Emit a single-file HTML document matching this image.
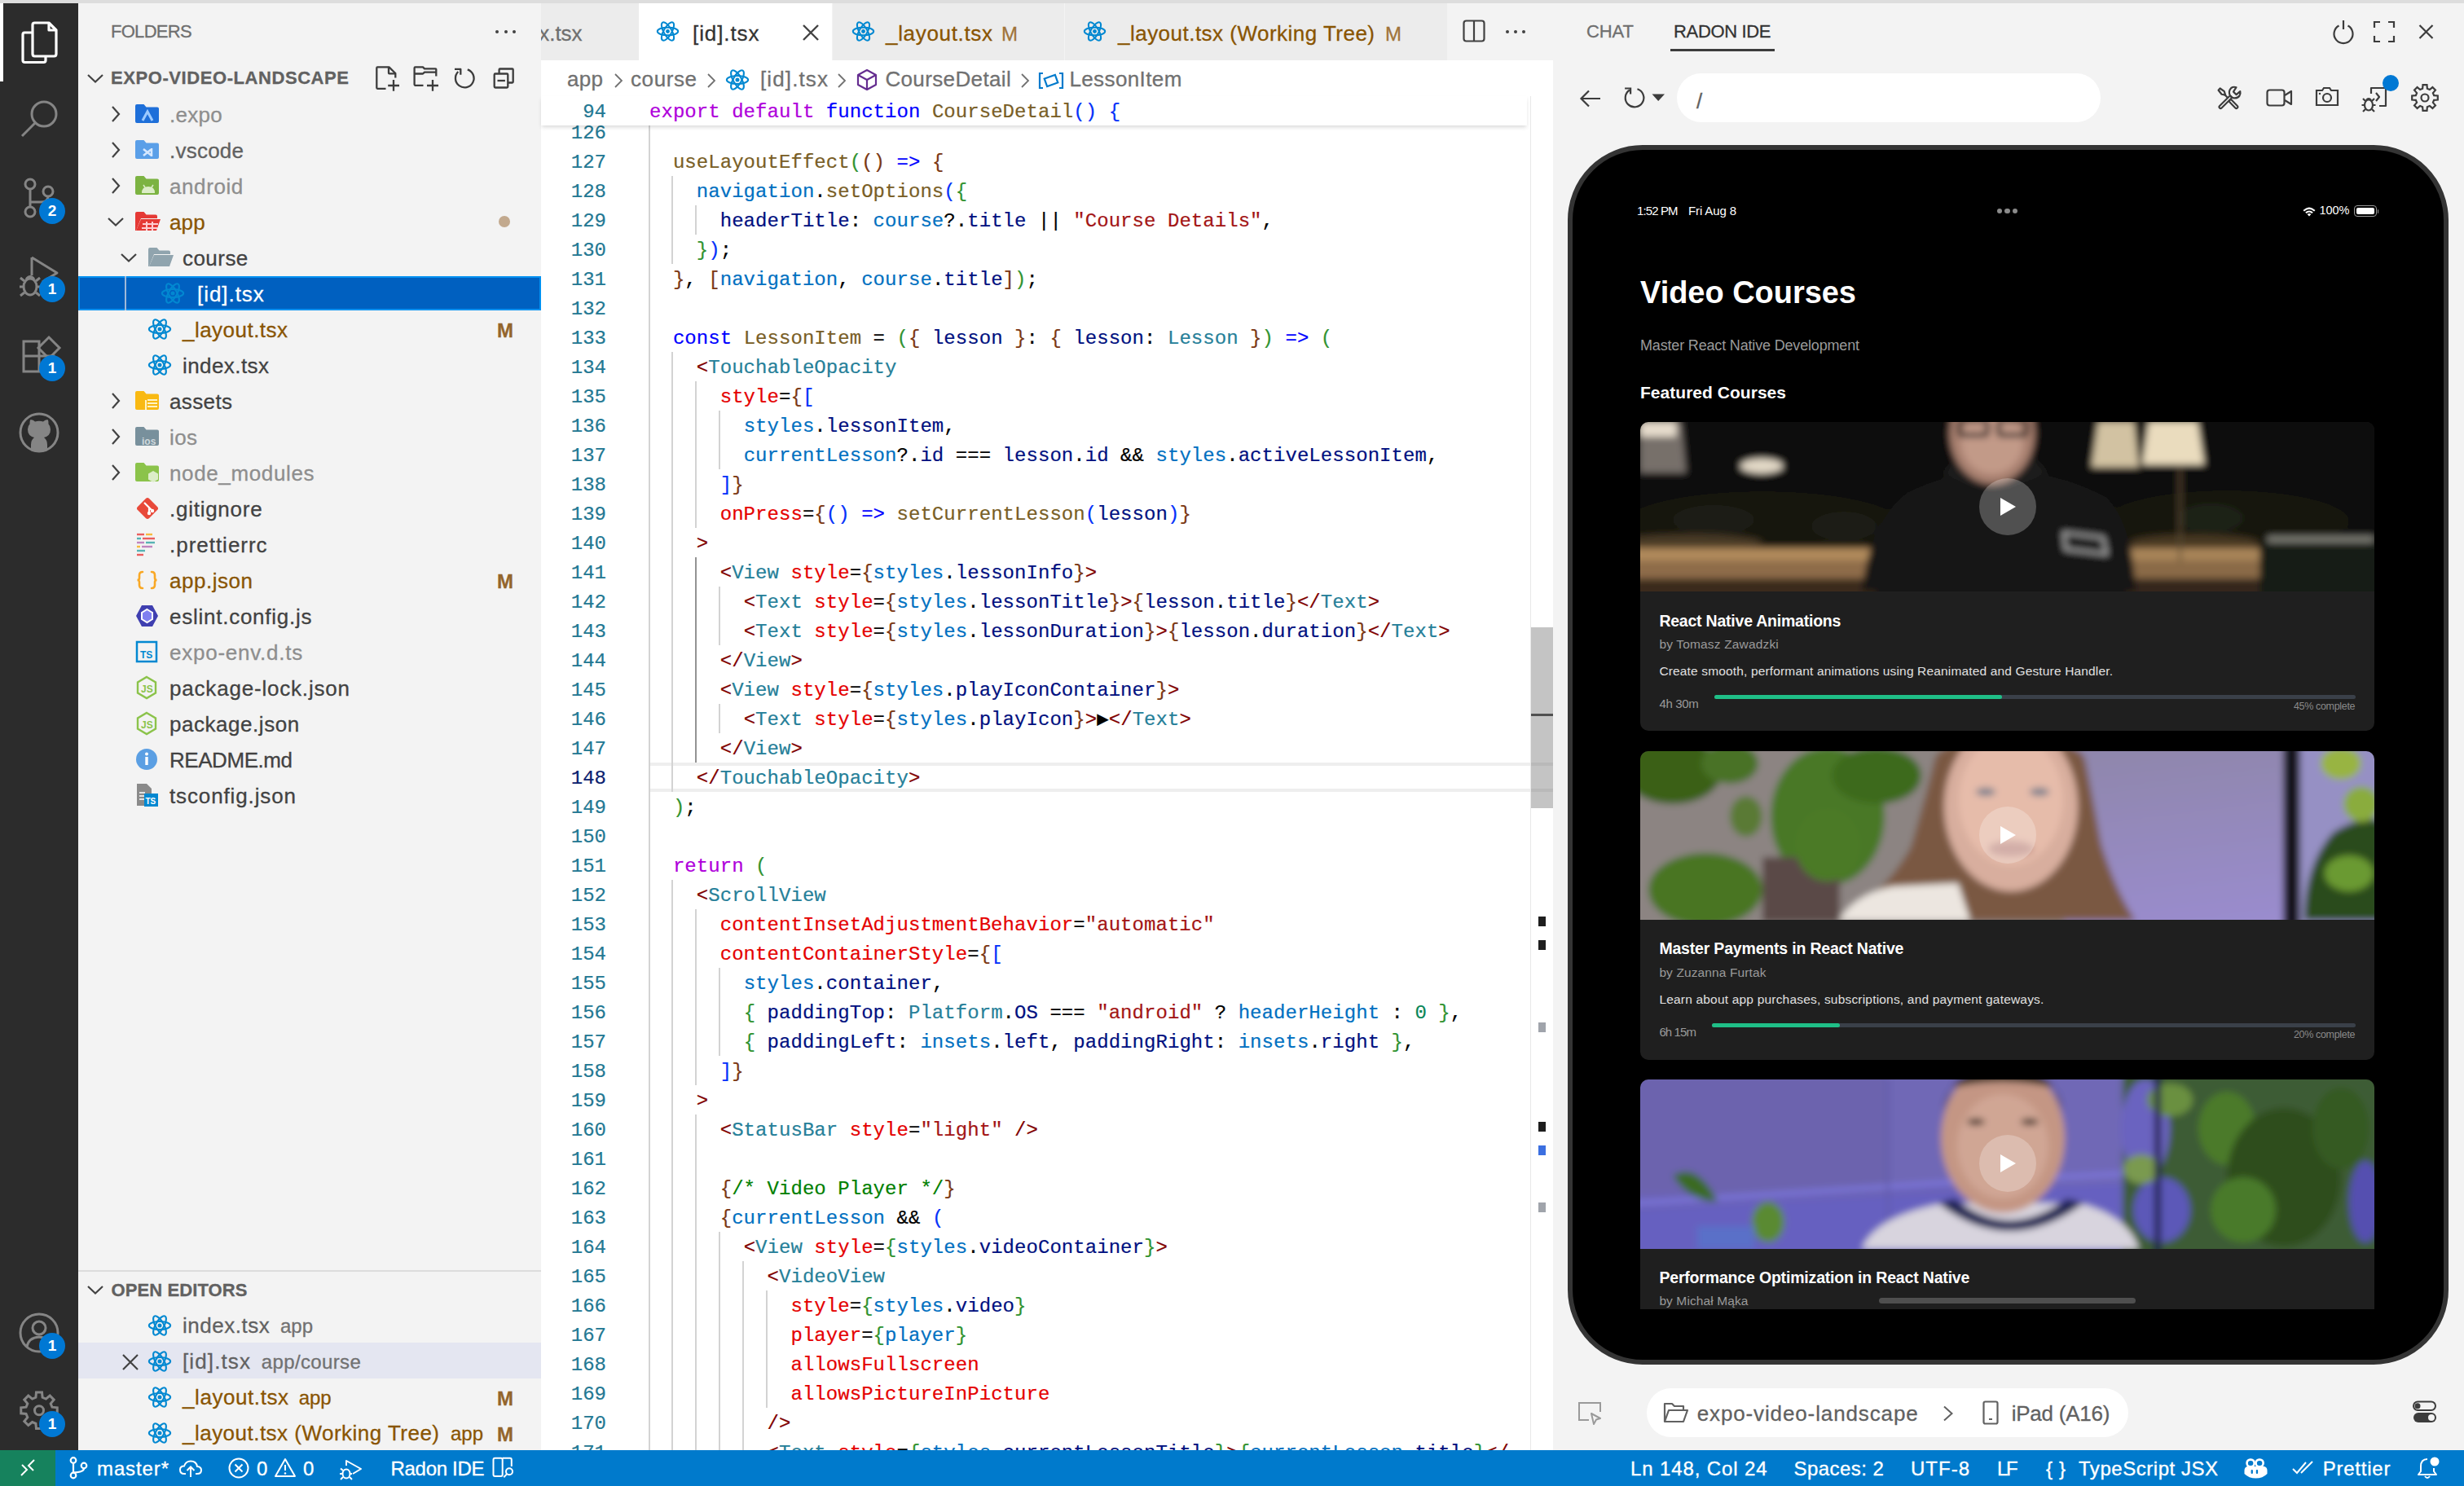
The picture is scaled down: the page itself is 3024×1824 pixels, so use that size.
<!DOCTYPE html><html><head><meta charset="utf-8"><style>
html,body{margin:0;padding:0;}
body{width:3024px;height:1824px;position:relative;overflow:hidden;background:#f3f3f3;font-family:"Liberation Sans",sans-serif;}
svg{overflow:visible}
</style></head><body>

<div style="position:absolute;left:0px;top:0px;width:3024px;height:4px;background:#dddddd;"></div>
<div style="position:absolute;left:0px;top:4px;width:96px;height:1776px;background:#2c2c2c;"></div>
<div style="position:absolute;left:96px;top:4px;width:568px;height:1776px;background:#f3f3f3;"></div>
<div style="position:absolute;left:664px;top:4px;width:1242px;height:70px;background:#f3f3f3;"></div>
<div style="position:absolute;left:664px;top:74px;width:1242px;height:1706px;background:#ffffff;"></div>
<div style="position:absolute;left:1906px;top:4px;width:1118px;height:1776px;background:#f3f3f3;"></div>
<div style="position:absolute;left:0px;top:1780px;width:3024px;height:44px;background:#007acc;"></div>
<div style="position:absolute;left:0px;top:1780px;width:68px;height:44px;background:#16825d;"></div>
<div style="position:absolute;left:0px;top:4px;width:4px;height:96px;background:#ffffff;"></div>
<svg style="position:absolute;left:24px;top:26px;" width="48" height="52" viewBox="0 0 48 52"><g fill="none" stroke="#fff" stroke-width="3.2" stroke-linejoin="round">
<path d="M16 12 V4.5 Q16 2 18.5 2 H36 L45 11 V40 Q45 43 42.5 43 H18.5 Q16 43 16 40 Z"/>
<path d="M36 2 V11 H45"/>
<path d="M16 14 H6 Q4 14 4 16.5 V48 Q4 50.5 6.5 50.5 H29.5 Q32 50.5 32 48 V43"/>
</g></svg>
<svg style="position:absolute;left:24px;top:122px;" width="50" height="50" viewBox="0 0 50 50"><g fill="none" stroke="#858585" stroke-width="3"><circle cx="30" cy="18" r="15"/><path d="M19.5 28.5 L3 45"/></g></svg>
<svg style="position:absolute;left:24px;top:218px;" width="50" height="52" viewBox="0 0 50 52"><g fill="none" stroke="#858585" stroke-width="3"><circle cx="13" cy="8" r="6"/><circle cx="13" cy="42" r="6"/><circle cx="35" cy="17" r="6"/><path d="M13 14 V36 M35 23 Q35 30 26 30 H13"/></g></svg>
<svg style="position:absolute;left:22px;top:312px;" width="52" height="56" viewBox="0 0 52 56"><g fill="none" stroke="#858585" stroke-width="3" stroke-linejoin="round"><path d="M17 4 V26 M17 4 L48 23 L30 34"/>
<ellipse cx="15" cy="40" rx="8" ry="10"/><path d="M7 40 H2 M23 40 H28 M8 33 L3 29 M22 33 L27 29 M8 47 L3 51 M22 47 L27 51 M10 31 Q15 24 20 31"/></g></svg>
<svg style="position:absolute;left:26px;top:410px;" width="50" height="52" viewBox="0 0 50 52"><g fill="none" stroke="#858585" stroke-width="3"><path d="M3 9 H22 V46 H3 Z M3 27 H40 V46 H22"/><path d="M34 4 L47 17 L34 30 L21 17 Z"/></g></svg>
<svg style="position:absolute;left:22px;top:506px;" width="52" height="52" viewBox="0 0 52 52"><circle cx="26" cy="25" r="23" fill="none" stroke="#858585" stroke-width="3"/>
<path fill="#858585" d="M16 40 Q16 34 20 31 Q12 29 12 21 Q12 17 14.5 14.5 Q14 11 15.5 9 Q19 9 21 11.5 Q26 10 31 11.5 Q33 9 36.5 9 Q38 11 37.5 14.5 Q40 17 40 21 Q40 29 32 31 Q36 34 36 40 V47 Q26 50 16 47 Z"/></svg>
<svg style="position:absolute;left:22px;top:1610px;" width="54" height="54" viewBox="0 0 54 54"><g fill="none" stroke="#858585" stroke-width="3"><circle cx="26" cy="26" r="23"/><circle cx="26" cy="20" r="8"/><path d="M11 43 Q13 32 26 31 Q39 32 41 43"/></g></svg>
<svg style="position:absolute;left:22px;top:1706px;" width="54" height="54" viewBox="0 0 54 54"><polygon points="21.90,9.32 22.48,3.08 29.52,3.08 30.10,9.32 34.40,11.10 39.23,7.10 44.20,12.07 40.20,16.90 41.98,21.20 48.22,21.78 48.22,28.82 41.98,29.40 40.20,33.70 44.20,38.53 39.23,43.50 34.40,39.50 30.10,41.28 29.52,47.52 22.48,47.52 21.90,41.28 17.60,39.50 12.77,43.50 7.80,38.53 11.80,33.70 10.02,29.40 3.78,28.82 3.78,21.78 10.02,21.20 11.80,16.90 7.80,12.07 12.77,7.10 17.60,11.10" fill="none" stroke="#858585" stroke-width="3" stroke-linejoin="miter"/><circle cx="26" cy="25.3" r="5.5" fill="none" stroke="#858585" stroke-width="3"/></svg>
<div style="position:absolute;left:48px;top:243px;width:32px;height:32px;border-radius:16px;background:#0078d4;color:#fff;font:700 19px/32px 'Liberation Sans', sans-serif;text-align:center;">2</div>
<div style="position:absolute;left:48px;top:339px;width:32px;height:32px;border-radius:16px;background:#0078d4;color:#fff;font:700 19px/32px 'Liberation Sans', sans-serif;text-align:center;">1</div>
<div style="position:absolute;left:48px;top:436px;width:32px;height:32px;border-radius:16px;background:#0078d4;color:#fff;font:700 19px/32px 'Liberation Sans', sans-serif;text-align:center;">1</div>
<div style="position:absolute;left:48px;top:1636px;width:32px;height:32px;border-radius:16px;background:#0078d4;color:#fff;font:700 19px/32px 'Liberation Sans', sans-serif;text-align:center;">1</div>
<div style="position:absolute;left:48px;top:1732px;width:32px;height:32px;border-radius:16px;background:#0078d4;color:#fff;font:700 19px/32px 'Liberation Sans', sans-serif;text-align:center;">1</div>
<div style="position:absolute;left:136px;top:17.38px;font:400 22px/44px 'Liberation Sans', sans-serif;color:#6f6f6f;white-space:pre;-webkit-text-stroke:0.3px #6f6f6f;letter-spacing:-0.719px;">FOLDERS</div>
<div style="position:absolute;left:608px;top:37px;width:4px;height:4px;background:#424242;border-radius:2px;"></div>
<div style="position:absolute;left:618.5px;top:37px;width:4px;height:4px;background:#424242;border-radius:2px;"></div>
<div style="position:absolute;left:629px;top:37px;width:4px;height:4px;background:#424242;border-radius:2px;"></div>
<svg style="position:absolute;left:106px;top:89px;" width="22" height="14" viewBox="0 0 22 14"><path d="M2 3 L11 11.5 L20 3" fill="none" stroke="#424242" stroke-width="2.2"/></svg>
<div style="position:absolute;left:136px;top:74.38px;font:700 22px/44px 'Liberation Sans', sans-serif;color:#616161;white-space:pre;-webkit-text-stroke:0.3px #616161;letter-spacing:0.571px;">EXPO-VIDEO-LANDSCAPE</div>
<svg style="position:absolute;left:440px;top:70px;" width="210" height="55" viewBox="0 0 210 55"><g fill="none" stroke="#3c3c3c" stroke-width="2.3" stroke-linejoin="round">
<path d="M33.5 38.8 H23.3 Q22.3 38.8 22.3 37.8 V13.4 Q22.3 12.4 23.3 12.4 H37.5 L45.3 20 V25.5"/><path d="M37 12.6 V19.6 Q37 20.3 37.7 20.3 H45.2"/>
<path d="M36.2 35 H50 M43 28.1 V41.8"/>
<path d="M79.5 34.8 H69.6 Q68.6 34.8 68.6 33.8 V13.4 Q68.6 12.4 69.6 12.4 H79 L81 14.3 H94.5 Q95.3 14.3 95.3 15.1 V23.5 M68.8 20.5 H79 L81 18.6 H95.2"/>
<path d="M84 35 H98 M91 28.1 V41.8"/>
<path d="M133.8 15.3 A11.3 11.3 0 1 1 122.3 18"/><path d="M118 14.9 H125.3 V21.7"/>
<path d="M172.6 20.3 V15.5 Q172.6 14.5 173.6 14.5 H188.7 Q189.7 14.5 189.7 15.5 V30.5 Q189.7 31.5 188.7 31.5 H183.5"/>
<rect x="166.7" y="20.5" width="16.6" height="17" rx="1.2"/><path d="M170.5 29 H179.9"/>
</g></svg>
<div style="position:absolute;left:96px;top:339px;width:568px;height:42px;background:#0060c0;box-shadow:inset 0 0 0 2px #0090f1;"></div>
<div style="position:absolute;left:153px;top:339px;width:2px;height:42px;background:#a0b8d8;"></div>
<svg style="position:absolute;left:135px;top:129px;" width="14" height="22" viewBox="0 0 14 22"><path d="M3 2 L11 11 L3 20" fill="none" stroke="#424242" stroke-width="2.2"/></svg>
<svg style="position:absolute;left:166px;top:127px;" width="30" height="26" viewBox="0 0 30 26"><path d="M0 3 Q0 1 2 1 H10.5 L13.5 4.5 H27 Q29 4.5 29 6.5 V22 Q29 24 27 24 H2 Q0 24 0 22 Z" fill="#1e6fd9"/><path d="M9 21 L15 10 L21 21" fill="none" stroke="#9ccaff" stroke-width="3"/></svg>
<div style="position:absolute;left:208px;top:114.99px;font:400 26px/52px 'Liberation Sans', sans-serif;color:#8e8e8e;white-space:pre;-webkit-text-stroke:0.3px #8e8e8e;letter-spacing:0.249px;">.expo</div>
<svg style="position:absolute;left:135px;top:173px;" width="14" height="22" viewBox="0 0 14 22"><path d="M3 2 L11 11 L3 20" fill="none" stroke="#424242" stroke-width="2.2"/></svg>
<svg style="position:absolute;left:166px;top:171px;" width="30" height="26" viewBox="0 0 30 26"><path d="M0 3 Q0 1 2 1 H10.5 L13.5 4.5 H27 Q29 4.5 29 6.5 V22 Q29 24 27 24 H2 Q0 24 0 22 Z" fill="#5a9fe8"/><path d="M10 12 L20 20 M10 20 L20 12 M20 11 V21" fill="none" stroke="#d6e8ff" stroke-width="2.5"/></svg>
<div style="position:absolute;left:208px;top:158.99px;font:400 26px/52px 'Liberation Sans', sans-serif;color:#616161;white-space:pre;-webkit-text-stroke:0.3px #616161;letter-spacing:0.232px;">.vscode</div>
<svg style="position:absolute;left:135px;top:217px;" width="14" height="22" viewBox="0 0 14 22"><path d="M3 2 L11 11 L3 20" fill="none" stroke="#424242" stroke-width="2.2"/></svg>
<svg style="position:absolute;left:166px;top:215px;" width="30" height="26" viewBox="0 0 30 26"><path d="M0 3 Q0 1 2 1 H10.5 L13.5 4.5 H27 Q29 4.5 29 6.5 V22 Q29 24 27 24 H2 Q0 24 0 22 Z" fill="#7cb342"/><path d="M8 22 Q8 14 16 14 Q24 14 24 22 Z" fill="#dcedc8"/><path d="M10 12 L12 15 M22 12 L20 15" stroke="#dcedc8" stroke-width="1.5"/></svg>
<div style="position:absolute;left:208px;top:202.99px;font:400 26px/52px 'Liberation Sans', sans-serif;color:#8e8e8e;white-space:pre;-webkit-text-stroke:0.3px #8e8e8e;letter-spacing:0.594px;">android</div>
<svg style="position:absolute;left:131px;top:265px;" width="22" height="14" viewBox="0 0 22 14"><path d="M2 3 L11 11.5 L20 3" fill="none" stroke="#424242" stroke-width="2.2"/></svg>
<svg style="position:absolute;left:166px;top:259px;" width="32" height="26" viewBox="0 0 32 26"><path d="M0 3 Q0 1 2 1 H10.5 L13.5 4.5 H25 Q27 4.5 27 6.5 V9 H7 L1 24 H0 Z" fill="#e53935"/><path d="M7 10 H31 L26 24 H1 Z" fill="#e53935"/><path d="M14 13 V24 M21 13 V24 M9 16 H28 M8 21 H27" stroke="#ffcdd2" stroke-width="2"/></svg>
<div style="position:absolute;left:208px;top:246.99px;font:400 26px/52px 'Liberation Sans', sans-serif;color:#895503;white-space:pre;-webkit-text-stroke:0.3px #895503;letter-spacing:0.159px;">app</div>
<svg style="position:absolute;left:147px;top:309px;" width="22" height="14" viewBox="0 0 22 14"><path d="M2 3 L11 11.5 L20 3" fill="none" stroke="#424242" stroke-width="2.2"/></svg>
<svg style="position:absolute;left:182px;top:303px;" width="32" height="26" viewBox="0 0 32 26"><path d="M0 3 Q0 1 2 1 H10.5 L13.5 4.5 H25 Q27 4.5 27 6.5 V9 H7 L1 24 H0 Z" fill="#90a4ae"/><path d="M7 10 H31 L26 24 H1 Z" fill="#90a4ae"/></svg>
<div style="position:absolute;left:224px;top:290.99px;font:400 26px/52px 'Liberation Sans', sans-serif;color:#424242;white-space:pre;-webkit-text-stroke:0.3px #424242;letter-spacing:0.452px;">course</div>
<svg style="position:absolute;left:198px;top:346px;" width="28" height="28" viewBox="0 0 28 28"><g fill="none" stroke="#0288d1" stroke-width="2.10"><ellipse cx="14.0" cy="14.0" rx="13.16" ry="5.04"/><ellipse cx="14.0" cy="14.0" rx="13.16" ry="5.04" transform="rotate(60 14.0 14.0)"/><ellipse cx="14.0" cy="14.0" rx="13.16" ry="5.04" transform="rotate(120 14.0 14.0)"/></g><circle cx="14.0" cy="14.0" r="2.52" fill="#0288d1"/></svg>
<div style="position:absolute;left:242px;top:334.99px;font:400 26px/52px 'Liberation Sans', sans-serif;color:#ffffff;white-space:pre;-webkit-text-stroke:0.3px #ffffff;letter-spacing:0.952px;">[id].tsx</div>
<svg style="position:absolute;left:182px;top:390px;" width="28" height="28" viewBox="0 0 28 28"><g fill="none" stroke="#0288d1" stroke-width="2.10"><ellipse cx="14.0" cy="14.0" rx="13.16" ry="5.04"/><ellipse cx="14.0" cy="14.0" rx="13.16" ry="5.04" transform="rotate(60 14.0 14.0)"/><ellipse cx="14.0" cy="14.0" rx="13.16" ry="5.04" transform="rotate(120 14.0 14.0)"/></g><circle cx="14.0" cy="14.0" r="2.52" fill="#0288d1"/></svg>
<div style="position:absolute;left:224px;top:378.99px;font:400 26px/52px 'Liberation Sans', sans-serif;color:#895503;white-space:pre;-webkit-text-stroke:0.3px #895503;letter-spacing:0.471px;">_layout.tsx</div>
<svg style="position:absolute;left:182px;top:434px;" width="28" height="28" viewBox="0 0 28 28"><g fill="none" stroke="#0288d1" stroke-width="2.10"><ellipse cx="14.0" cy="14.0" rx="13.16" ry="5.04"/><ellipse cx="14.0" cy="14.0" rx="13.16" ry="5.04" transform="rotate(60 14.0 14.0)"/><ellipse cx="14.0" cy="14.0" rx="13.16" ry="5.04" transform="rotate(120 14.0 14.0)"/></g><circle cx="14.0" cy="14.0" r="2.52" fill="#0288d1"/></svg>
<div style="position:absolute;left:224px;top:422.99px;font:400 26px/52px 'Liberation Sans', sans-serif;color:#424242;white-space:pre;-webkit-text-stroke:0.3px #424242;letter-spacing:0.424px;">index.tsx</div>
<svg style="position:absolute;left:135px;top:481px;" width="14" height="22" viewBox="0 0 14 22"><path d="M3 2 L11 11 L3 20" fill="none" stroke="#424242" stroke-width="2.2"/></svg>
<svg style="position:absolute;left:166px;top:479px;" width="30" height="26" viewBox="0 0 30 26"><path d="M0 3 Q0 1 2 1 H10.5 L13.5 4.5 H27 Q29 4.5 29 6.5 V22 Q29 24 27 24 H2 Q0 24 0 22 Z" fill="#f9b912"/><path d="M15 12 H27 M15 16 H27 M15 20 H27 M13 12 V24" stroke="#fff3c4" stroke-width="2"/></svg>
<div style="position:absolute;left:208px;top:466.99px;font:400 26px/52px 'Liberation Sans', sans-serif;color:#424242;white-space:pre;-webkit-text-stroke:0.3px #424242;letter-spacing:0.371px;">assets</div>
<svg style="position:absolute;left:135px;top:525px;" width="14" height="22" viewBox="0 0 14 22"><path d="M3 2 L11 11 L3 20" fill="none" stroke="#424242" stroke-width="2.2"/></svg>
<svg style="position:absolute;left:166px;top:523px;" width="30" height="26" viewBox="0 0 30 26"><path d="M0 3 Q0 1 2 1 H10.5 L13.5 4.5 H27 Q29 4.5 29 6.5 V22 Q29 24 27 24 H2 Q0 24 0 22 Z" fill="#78909c"/><text x="8" y="23" font-family="Liberation Sans" font-weight="700" font-size="12" fill="#cfd8dc">ios</text></svg>
<div style="position:absolute;left:208px;top:510.99px;font:400 26px/52px 'Liberation Sans', sans-serif;color:#8e8e8e;white-space:pre;-webkit-text-stroke:0.3px #8e8e8e;letter-spacing:0.381px;">ios</div>
<svg style="position:absolute;left:135px;top:569px;" width="14" height="22" viewBox="0 0 14 22"><path d="M3 2 L11 11 L3 20" fill="none" stroke="#424242" stroke-width="2.2"/></svg>
<svg style="position:absolute;left:166px;top:567px;" width="30" height="26" viewBox="0 0 30 26"><path d="M0 3 Q0 1 2 1 H10.5 L13.5 4.5 H27 Q29 4.5 29 6.5 V22 Q29 24 27 24 H2 Q0 24 0 22 Z" fill="#8bc34a"/><path d="M22 11 L28 14.5 V21.5 L22 25 L16 21.5 V14.5 Z" fill="#dcedc8"/></svg>
<div style="position:absolute;left:208px;top:554.99px;font:400 26px/52px 'Liberation Sans', sans-serif;color:#8e8e8e;white-space:pre;-webkit-text-stroke:0.3px #8e8e8e;letter-spacing:0.629px;">node_modules</div>
<svg style="position:absolute;left:166px;top:609px;" width="30" height="30" viewBox="0 0 30 30"><rect x="5" y="5" width="20" height="20" rx="3" transform="rotate(45 15 15)" fill="#e8493a"/><g stroke="#fff" stroke-width="2.2" fill="none"><path d="M11 8 L17 14 V21 M17 14 L21 18"/></g><circle cx="17" cy="21" r="2.2" fill="#fff"/><circle cx="21" cy="18" r="2.2" fill="#fff"/></svg>
<div style="position:absolute;left:208px;top:598.99px;font:400 26px/52px 'Liberation Sans', sans-serif;color:#424242;white-space:pre;-webkit-text-stroke:0.3px #424242;letter-spacing:0.737px;">.gitignore</div>
<svg style="position:absolute;left:166px;top:653px;" width="28" height="30" viewBox="0 0 28 30"><g stroke-width="2.4"><path d="M2 3 H11" stroke="#ea5e5e"/><path d="M13 3 H21" stroke="#f7ba3e"/><path d="M2 8 H7" stroke="#56b3b4"/><path d="M9 8 H24" stroke="#ea5e5e"/><path d="M2 13 H11" stroke="#bf85bf"/><path d="M13 13 H24" stroke="#56b3b4"/><path d="M2 18 H6" stroke="#f7ba3e"/><path d="M8 18 H21" stroke="#bf85bf"/><path d="M2 23 H12" stroke="#56b3b4"/><path d="M2 28 H10" stroke="#ea5e5e"/></g></svg>
<div style="position:absolute;left:208px;top:642.99px;font:400 26px/52px 'Liberation Sans', sans-serif;color:#424242;white-space:pre;-webkit-text-stroke:0.3px #424242;letter-spacing:0.979px;">.prettierrc</div>
<svg style="position:absolute;left:166px;top:698px;" width="30" height="28" viewBox="0 0 30 28"><g fill="none" stroke="#f9a825" stroke-width="2.6" stroke-linecap="round"><path d="M9 4 Q5 4 5 8 V11.5 Q5 14 2.5 14 Q5 14 5 16.5 V20 Q5 24 9 24"/><path d="M20 4 Q24 4 24 8 V11.5 Q24 14 26.5 14 Q24 14 24 16.5 V20 Q24 24 20 24"/></g></svg>
<div style="position:absolute;left:208px;top:686.99px;font:400 26px/52px 'Liberation Sans', sans-serif;color:#895503;white-space:pre;-webkit-text-stroke:0.3px #895503;letter-spacing:0.528px;">app.json</div>
<svg style="position:absolute;left:166px;top:742px;" width="30" height="28" viewBox="0 0 30 28"><path d="M8 1 H21 L28 14 L21 27 H8 L1 14 Z" fill="#3f3fb0"/><path d="M14.5 6 L21 10 V18 L14.5 22 L8 18 V10 Z" fill="#8080f0" stroke="#ffffff" stroke-width="2"/></svg>
<div style="position:absolute;left:208px;top:730.99px;font:400 26px/52px 'Liberation Sans', sans-serif;color:#424242;white-space:pre;-webkit-text-stroke:0.3px #424242;letter-spacing:0.746px;">eslint.config.js</div>
<svg style="position:absolute;left:166px;top:786px;" width="28" height="28" viewBox="0 0 28 28"><rect x="2" y="2" width="24" height="24" fill="none" stroke="#0288d1" stroke-width="2.5"/><text x="6" y="22" font-family="Liberation Sans" font-weight="700" font-size="12" fill="#0288d1">TS</text></svg>
<div style="position:absolute;left:208px;top:774.99px;font:400 26px/52px 'Liberation Sans', sans-serif;color:#8e8e8e;white-space:pre;-webkit-text-stroke:0.3px #8e8e8e;letter-spacing:0.753px;">expo-env.d.ts</div>
<svg style="position:absolute;left:166px;top:829px;" width="28" height="30" viewBox="0 0 28 30"><path d="M14 2 L25 8.5 V21.5 L14 28 L3 21.5 V8.5 Z" fill="none" stroke="#8bc34a" stroke-width="2.4"/><text x="7" y="21" font-family="Liberation Sans" font-weight="700" font-size="12" fill="#8bc34a">JS</text></svg>
<div style="position:absolute;left:208px;top:818.99px;font:400 26px/52px 'Liberation Sans', sans-serif;color:#424242;white-space:pre;-webkit-text-stroke:0.3px #424242;letter-spacing:0.805px;">package-lock.json</div>
<svg style="position:absolute;left:166px;top:873px;" width="28" height="30" viewBox="0 0 28 30"><path d="M14 2 L25 8.5 V21.5 L14 28 L3 21.5 V8.5 Z" fill="none" stroke="#8bc34a" stroke-width="2.4"/><text x="7" y="21" font-family="Liberation Sans" font-weight="700" font-size="12" fill="#8bc34a">JS</text></svg>
<div style="position:absolute;left:208px;top:862.99px;font:400 26px/52px 'Liberation Sans', sans-serif;color:#424242;white-space:pre;-webkit-text-stroke:0.3px #424242;letter-spacing:0.543px;">package.json</div>
<svg style="position:absolute;left:166px;top:918px;" width="28" height="28" viewBox="0 0 28 28"><circle cx="14" cy="14" r="13" fill="#5b9fe3"/><rect x="12.3" y="11" width="3.4" height="10" fill="#fff"/><circle cx="14" cy="7.5" r="2" fill="#fff"/></svg>
<div style="position:absolute;left:208px;top:906.99px;font:400 26px/52px 'Liberation Sans', sans-serif;color:#424242;white-space:pre;-webkit-text-stroke:0.3px #424242;letter-spacing:-0.448px;">README.md</div>
<svg style="position:absolute;left:166px;top:961px;" width="28" height="30" viewBox="0 0 28 30"><path d="M2 1 H14 L20 7 V28 H2 Z" fill="#8a8a8a"/><path d="M5 12 H12 M5 16 H12 M5 20 H12" stroke="#fff" stroke-width="1.5"/><rect x="11" y="13" width="17" height="16" fill="#0288d1"/><text x="12.5" y="26" font-family="Liberation Sans" font-weight="700" font-size="10" fill="#fff">TS</text></svg>
<div style="position:absolute;left:208px;top:950.99px;font:400 26px/52px 'Liberation Sans', sans-serif;color:#424242;white-space:pre;-webkit-text-stroke:0.3px #424242;letter-spacing:0.873px;">tsconfig.json</div>
<div style="position:absolute;left:610px;top:381.68px;font:700 24px/48px 'Liberation Sans', sans-serif;color:#93652c;white-space:pre;-webkit-text-stroke:0.3px #93652c;">M</div>
<div style="position:absolute;left:610px;top:689.68px;font:700 24px/48px 'Liberation Sans', sans-serif;color:#93652c;white-space:pre;-webkit-text-stroke:0.3px #93652c;">M</div>
<div style="position:absolute;left:612px;top:265px;width:14px;height:14px;background:#c2a98e;border-radius:7px;"></div>
<div style="position:absolute;left:96px;top:1559px;width:568px;height:2px;background:#dcdcdc;"></div>
<svg style="position:absolute;left:106px;top:1576px;" width="22" height="14" viewBox="0 0 22 14"><path d="M2 3 L11 11.5 L20 3" fill="none" stroke="#424242" stroke-width="2.2"/></svg>
<div style="position:absolute;left:136.5px;top:1561.98px;font:700 22px/44px 'Liberation Sans', sans-serif;color:#616161;white-space:pre;-webkit-text-stroke:0.3px #616161;letter-spacing:0.104px;">OPEN EDITORS</div>
<div style="position:absolute;left:96px;top:1648px;width:568px;height:44px;background:#e4e6f1;"></div>
<svg style="position:absolute;left:182px;top:1613px;" width="28" height="28" viewBox="0 0 28 28"><g fill="none" stroke="#0288d1" stroke-width="2.10"><ellipse cx="14.0" cy="14.0" rx="13.16" ry="5.04"/><ellipse cx="14.0" cy="14.0" rx="13.16" ry="5.04" transform="rotate(60 14.0 14.0)"/><ellipse cx="14.0" cy="14.0" rx="13.16" ry="5.04" transform="rotate(120 14.0 14.0)"/></g><circle cx="14.0" cy="14.0" r="2.52" fill="#0288d1"/></svg>
<div style="position:absolute;left:224px;top:1600.99px;font:400 26px/52px 'Liberation Sans', sans-serif;color:#616161;white-space:pre;-webkit-text-stroke:0.3px #616161;letter-spacing:0.512px;">index.tsx</div>
<div style="position:absolute;left:344px;top:1603.68px;font:400 24px/48px 'Liberation Sans', sans-serif;color:#717171;white-space:pre;-webkit-text-stroke:0.3px #717171;letter-spacing:-0.022px;">app</div>
<svg style="position:absolute;left:182px;top:1657px;" width="28" height="28" viewBox="0 0 28 28"><g fill="none" stroke="#0288d1" stroke-width="2.10"><ellipse cx="14.0" cy="14.0" rx="13.16" ry="5.04"/><ellipse cx="14.0" cy="14.0" rx="13.16" ry="5.04" transform="rotate(60 14.0 14.0)"/><ellipse cx="14.0" cy="14.0" rx="13.16" ry="5.04" transform="rotate(120 14.0 14.0)"/></g><circle cx="14.0" cy="14.0" r="2.52" fill="#0288d1"/></svg>
<div style="position:absolute;left:224px;top:1644.99px;font:400 26px/52px 'Liberation Sans', sans-serif;color:#616161;white-space:pre;-webkit-text-stroke:0.3px #616161;letter-spacing:1.124px;">[id].tsx</div>
<div style="position:absolute;left:320.8px;top:1647.68px;font:400 24px/48px 'Liberation Sans', sans-serif;color:#717171;white-space:pre;-webkit-text-stroke:0.3px #717171;letter-spacing:0.361px;">app/course</div>
<svg style="position:absolute;left:149px;top:1661px;" width="22" height="22" viewBox="0 0 22 22"><path d="M2 2 L20 20 M20 2 L2 20" stroke="#424242" stroke-width="2.2"/></svg>
<svg style="position:absolute;left:182px;top:1701px;" width="28" height="28" viewBox="0 0 28 28"><g fill="none" stroke="#0288d1" stroke-width="2.10"><ellipse cx="14.0" cy="14.0" rx="13.16" ry="5.04"/><ellipse cx="14.0" cy="14.0" rx="13.16" ry="5.04" transform="rotate(60 14.0 14.0)"/><ellipse cx="14.0" cy="14.0" rx="13.16" ry="5.04" transform="rotate(120 14.0 14.0)"/></g><circle cx="14.0" cy="14.0" r="2.52" fill="#0288d1"/></svg>
<div style="position:absolute;left:224px;top:1688.99px;font:400 26px/52px 'Liberation Sans', sans-serif;color:#895503;white-space:pre;-webkit-text-stroke:0.3px #895503;letter-spacing:0.571px;">_layout.tsx</div>
<div style="position:absolute;left:366.7px;top:1691.68px;font:400 24px/48px 'Liberation Sans', sans-serif;color:#895503;white-space:pre;-webkit-text-stroke:0.3px #895503;letter-spacing:-0.022px;">app</div>
<svg style="position:absolute;left:182px;top:1745px;" width="28" height="28" viewBox="0 0 28 28"><g fill="none" stroke="#0288d1" stroke-width="2.10"><ellipse cx="14.0" cy="14.0" rx="13.16" ry="5.04"/><ellipse cx="14.0" cy="14.0" rx="13.16" ry="5.04" transform="rotate(60 14.0 14.0)"/><ellipse cx="14.0" cy="14.0" rx="13.16" ry="5.04" transform="rotate(120 14.0 14.0)"/></g><circle cx="14.0" cy="14.0" r="2.52" fill="#0288d1"/></svg>
<div style="position:absolute;left:224px;top:1732.99px;font:400 26px/52px 'Liberation Sans', sans-serif;color:#895503;white-space:pre;-webkit-text-stroke:0.3px #895503;letter-spacing:0.481px;">_layout.tsx (Working Tree)</div>
<div style="position:absolute;left:553px;top:1735.68px;font:400 24px/48px 'Liberation Sans', sans-serif;color:#895503;white-space:pre;-webkit-text-stroke:0.3px #895503;letter-spacing:-0.022px;">app</div>
<div style="position:absolute;left:610px;top:1692.68px;font:700 24px/48px 'Liberation Sans', sans-serif;color:#93652c;white-space:pre;-webkit-text-stroke:0.3px #93652c;">M</div>
<div style="position:absolute;left:610px;top:1736.68px;font:700 24px/48px 'Liberation Sans', sans-serif;color:#93652c;white-space:pre;-webkit-text-stroke:0.3px #93652c;">M</div>
<div style="position:absolute;left:664px;top:4px;width:120px;height:70px;background:#ececec;"></div>
<div style="position:absolute;left:1022px;top:4px;width:285px;height:70px;background:#ececec;"></div>
<div style="position:absolute;left:1307px;top:4px;width:470px;height:70px;background:#ececec;"></div>
<div style="position:absolute;left:784px;top:4px;width:238px;height:70px;background:#ffffff;"></div>
<div style="position:absolute;left:1306px;top:4px;width:1px;height:70px;background:#f3f3f3;"></div>
<div style="position:absolute;left:1776px;top:4px;width:1px;height:70px;background:#f3f3f3;"></div>
<div style="position:absolute;left:1021px;top:4px;width:1px;height:70px;background:#f3f3f3;"></div>
<div style="position:absolute;left:664px;top:4px;width:120px;height:70px;overflow:hidden;">
<div style="position:absolute;left:-52px;top:10.99px;font:400 26px/52px 'Liberation Sans', sans-serif;color:#6f6f6f;white-space:pre;-webkit-text-stroke:0.3px #6f6f6f;">index.tsx</div>
</div>
<svg style="position:absolute;left:806px;top:25px;" width="27" height="27" viewBox="0 0 27 27"><g fill="none" stroke="#0288d1" stroke-width="2.02"><ellipse cx="13.5" cy="13.5" rx="12.69" ry="4.86"/><ellipse cx="13.5" cy="13.5" rx="12.69" ry="4.86" transform="rotate(60 13.5 13.5)"/><ellipse cx="13.5" cy="13.5" rx="12.69" ry="4.86" transform="rotate(120 13.5 13.5)"/></g><circle cx="13.5" cy="13.5" r="2.43" fill="#0288d1"/></svg>
<div style="position:absolute;left:850px;top:14.99px;font:400 26px/52px 'Liberation Sans', sans-serif;color:#333333;white-space:pre;-webkit-text-stroke:0.3px #333333;letter-spacing:0.909px;">[id].tsx</div>
<svg style="position:absolute;left:984px;top:29px;" width="22" height="22" viewBox="0 0 22 22"><path d="M2 2 L20 20 M20 2 L2 20" stroke="#424242" stroke-width="2.4"/></svg>
<svg style="position:absolute;left:1046px;top:25px;" width="27" height="27" viewBox="0 0 27 27"><g fill="none" stroke="#0288d1" stroke-width="2.02"><ellipse cx="13.5" cy="13.5" rx="12.69" ry="4.86"/><ellipse cx="13.5" cy="13.5" rx="12.69" ry="4.86" transform="rotate(60 13.5 13.5)"/><ellipse cx="13.5" cy="13.5" rx="12.69" ry="4.86" transform="rotate(120 13.5 13.5)"/></g><circle cx="13.5" cy="13.5" r="2.43" fill="#0288d1"/></svg>
<div style="position:absolute;left:1087px;top:14.99px;font:400 26px/52px 'Liberation Sans', sans-serif;color:#895503;white-space:pre;-webkit-text-stroke:0.3px #895503;letter-spacing:0.671px;">_layout.tsx</div>
<div style="position:absolute;left:1229px;top:17.68px;font:400 24px/48px 'Liberation Sans', sans-serif;color:#a0743a;white-space:pre;-webkit-text-stroke:0.3px #a0743a;">M</div>
<svg style="position:absolute;left:1330px;top:25px;" width="27" height="27" viewBox="0 0 27 27"><g fill="none" stroke="#0288d1" stroke-width="2.02"><ellipse cx="13.5" cy="13.5" rx="12.69" ry="4.86"/><ellipse cx="13.5" cy="13.5" rx="12.69" ry="4.86" transform="rotate(60 13.5 13.5)"/><ellipse cx="13.5" cy="13.5" rx="12.69" ry="4.86" transform="rotate(120 13.5 13.5)"/></g><circle cx="13.5" cy="13.5" r="2.43" fill="#0288d1"/></svg>
<div style="position:absolute;left:1372px;top:14.99px;font:400 26px/52px 'Liberation Sans', sans-serif;color:#895503;white-space:pre;-webkit-text-stroke:0.3px #895503;letter-spacing:0.481px;">_layout.tsx (Working Tree)</div>
<div style="position:absolute;left:1700px;top:17.68px;font:400 24px/48px 'Liberation Sans', sans-serif;color:#a0743a;white-space:pre;-webkit-text-stroke:0.3px #a0743a;">M</div>
<svg style="position:absolute;left:1795px;top:24px;" width="28" height="28" viewBox="0 0 28 28"><rect x="1.5" y="1.5" width="25" height="25" rx="3" fill="none" stroke="#424242" stroke-width="2.2"/><path d="M14 2 V26" stroke="#424242" stroke-width="2.2"/></svg>
<div style="position:absolute;left:1848px;top:37px;width:4px;height:4px;background:#424242;border-radius:2px;"></div>
<div style="position:absolute;left:1858px;top:37px;width:4px;height:4px;background:#424242;border-radius:2px;"></div>
<div style="position:absolute;left:1868px;top:37px;width:4px;height:4px;background:#424242;border-radius:2px;"></div>
<div style="position:absolute;left:696px;top:70.99px;font:400 26px/52px 'Liberation Sans', sans-serif;color:#717171;white-space:pre;-webkit-text-stroke:0.3px #717171;letter-spacing:0.309px;">app</div>
<svg style="position:absolute;left:752.5px;top:89px;" width="12" height="20" viewBox="0 0 12 20"><path d="M2 2 L10 10 L2 18" fill="none" stroke="#717171" stroke-width="1.8"/></svg>
<div style="position:absolute;left:774px;top:70.99px;font:400 26px/52px 'Liberation Sans', sans-serif;color:#717171;white-space:pre;-webkit-text-stroke:0.3px #717171;letter-spacing:0.592px;">course</div>
<svg style="position:absolute;left:866.5px;top:89px;" width="12" height="20" viewBox="0 0 12 20"><path d="M2 2 L10 10 L2 18" fill="none" stroke="#717171" stroke-width="1.8"/></svg>
<svg style="position:absolute;left:890.5px;top:84px;" width="28" height="28" viewBox="0 0 28 28"><g fill="none" stroke="#0288d1" stroke-width="2.10"><ellipse cx="14.0" cy="14.0" rx="13.16" ry="5.04"/><ellipse cx="14.0" cy="14.0" rx="13.16" ry="5.04" transform="rotate(60 14.0 14.0)"/><ellipse cx="14.0" cy="14.0" rx="13.16" ry="5.04" transform="rotate(120 14.0 14.0)"/></g><circle cx="14.0" cy="14.0" r="2.52" fill="#0288d1"/></svg>
<div style="position:absolute;left:933px;top:70.99px;font:400 26px/52px 'Liberation Sans', sans-serif;color:#717171;white-space:pre;-webkit-text-stroke:0.3px #717171;letter-spacing:1.124px;">[id].tsx</div>
<svg style="position:absolute;left:1026.5px;top:89px;" width="12" height="20" viewBox="0 0 12 20"><path d="M2 2 L10 10 L2 18" fill="none" stroke="#717171" stroke-width="1.8"/></svg>
<svg style="position:absolute;left:1050px;top:84px;" width="28" height="28" viewBox="0 0 28 28"><g fill="none" stroke="#652d90" stroke-width="2.2" stroke-linejoin="round"><path d="M14 2 L25 8 V20 L14 26 L3 20 V8 Z"/><path d="M3 8 L14 14 L25 8 M14 14 V26"/></g></svg>
<div style="position:absolute;left:1086.4px;top:70.99px;font:400 26px/52px 'Liberation Sans', sans-serif;color:#717171;white-space:pre;-webkit-text-stroke:0.3px #717171;letter-spacing:0.373px;">CourseDetail</div>
<svg style="position:absolute;left:1251.5px;top:89px;" width="12" height="20" viewBox="0 0 12 20"><path d="M2 2 L10 10 L2 18" fill="none" stroke="#717171" stroke-width="1.8"/></svg>
<svg style="position:absolute;left:1274px;top:88px;" width="32" height="22" viewBox="0 0 32 22"><g fill="none" stroke="#007acc" stroke-width="2.2"><path d="M6 2 H2 V20 H6 M26 2 H30 V20 H26"/><rect x="9" y="6" width="14" height="10" transform="rotate(-20 16 11)"/></g></svg>
<div style="position:absolute;left:1312.4px;top:70.99px;font:400 26px/52px 'Liberation Sans', sans-serif;color:#717171;white-space:pre;-webkit-text-stroke:0.3px #717171;letter-spacing:0.399px;">LessonItem</div>
<div style="position:absolute;left:0;top:154px;width:1906px;height:1626px;overflow:hidden;">
<div style="position:absolute;left:0;top:-154px;width:1906px;height:1824px;">
<div style="position:absolute;left:797px;top:936px;width:1109px;height:36px;background:transparent;box-sizing:border-box;border-top:4px solid #eeeeee;border-bottom:4px solid #eeeeee;"></div>
<div style="position:absolute;left:795.5px;top:144px;width:2px;height:36px;background:#d3d3d3;"></div>
<div style="position:absolute;left:795.5px;top:180px;width:2px;height:36px;background:#d3d3d3;"></div>
<div style="position:absolute;left:795.5px;top:216px;width:2px;height:36px;background:#d3d3d3;"></div>
<div style="position:absolute;left:824.4px;top:216px;width:2px;height:36px;background:#d3d3d3;"></div>
<div style="position:absolute;left:795.5px;top:252px;width:2px;height:36px;background:#d3d3d3;"></div>
<div style="position:absolute;left:824.4px;top:252px;width:2px;height:36px;background:#d3d3d3;"></div>
<div style="position:absolute;left:853.3px;top:252px;width:2px;height:36px;background:#d3d3d3;"></div>
<div style="position:absolute;left:795.5px;top:288px;width:2px;height:36px;background:#d3d3d3;"></div>
<div style="position:absolute;left:824.4px;top:288px;width:2px;height:36px;background:#d3d3d3;"></div>
<div style="position:absolute;left:795.5px;top:324px;width:2px;height:36px;background:#d3d3d3;"></div>
<div style="position:absolute;left:795.5px;top:360px;width:2px;height:36px;background:#d3d3d3;"></div>
<div style="position:absolute;left:795.5px;top:396px;width:2px;height:36px;background:#d3d3d3;"></div>
<div style="position:absolute;left:795.5px;top:432px;width:2px;height:36px;background:#d3d3d3;"></div>
<div style="position:absolute;left:824.4px;top:432px;width:2px;height:36px;background:#d3d3d3;"></div>
<div style="position:absolute;left:795.5px;top:468px;width:2px;height:36px;background:#d3d3d3;"></div>
<div style="position:absolute;left:824.4px;top:468px;width:2px;height:36px;background:#d3d3d3;"></div>
<div style="position:absolute;left:853.3px;top:468px;width:2px;height:36px;background:#d3d3d3;"></div>
<div style="position:absolute;left:795.5px;top:504px;width:2px;height:36px;background:#d3d3d3;"></div>
<div style="position:absolute;left:824.4px;top:504px;width:2px;height:36px;background:#d3d3d3;"></div>
<div style="position:absolute;left:853.3px;top:504px;width:2px;height:36px;background:#d3d3d3;"></div>
<div style="position:absolute;left:882.2px;top:504px;width:2px;height:36px;background:#d3d3d3;"></div>
<div style="position:absolute;left:795.5px;top:540px;width:2px;height:36px;background:#d3d3d3;"></div>
<div style="position:absolute;left:824.4px;top:540px;width:2px;height:36px;background:#d3d3d3;"></div>
<div style="position:absolute;left:853.3px;top:540px;width:2px;height:36px;background:#d3d3d3;"></div>
<div style="position:absolute;left:882.2px;top:540px;width:2px;height:36px;background:#d3d3d3;"></div>
<div style="position:absolute;left:795.5px;top:576px;width:2px;height:36px;background:#d3d3d3;"></div>
<div style="position:absolute;left:824.4px;top:576px;width:2px;height:36px;background:#d3d3d3;"></div>
<div style="position:absolute;left:853.3px;top:576px;width:2px;height:36px;background:#d3d3d3;"></div>
<div style="position:absolute;left:795.5px;top:612px;width:2px;height:36px;background:#d3d3d3;"></div>
<div style="position:absolute;left:824.4px;top:612px;width:2px;height:36px;background:#d3d3d3;"></div>
<div style="position:absolute;left:853.3px;top:612px;width:2px;height:36px;background:#d3d3d3;"></div>
<div style="position:absolute;left:795.5px;top:648px;width:2px;height:36px;background:#d3d3d3;"></div>
<div style="position:absolute;left:824.4px;top:648px;width:2px;height:36px;background:#d3d3d3;"></div>
<div style="position:absolute;left:795.5px;top:684px;width:2px;height:36px;background:#d3d3d3;"></div>
<div style="position:absolute;left:824.4px;top:684px;width:2px;height:36px;background:#d3d3d3;"></div>
<div style="position:absolute;left:853.3px;top:684px;width:2px;height:36px;background:#939393;"></div>
<div style="position:absolute;left:795.5px;top:720px;width:2px;height:36px;background:#d3d3d3;"></div>
<div style="position:absolute;left:824.4px;top:720px;width:2px;height:36px;background:#d3d3d3;"></div>
<div style="position:absolute;left:853.3px;top:720px;width:2px;height:36px;background:#939393;"></div>
<div style="position:absolute;left:882.2px;top:720px;width:2px;height:36px;background:#d3d3d3;"></div>
<div style="position:absolute;left:795.5px;top:756px;width:2px;height:36px;background:#d3d3d3;"></div>
<div style="position:absolute;left:824.4px;top:756px;width:2px;height:36px;background:#d3d3d3;"></div>
<div style="position:absolute;left:853.3px;top:756px;width:2px;height:36px;background:#939393;"></div>
<div style="position:absolute;left:882.2px;top:756px;width:2px;height:36px;background:#d3d3d3;"></div>
<div style="position:absolute;left:795.5px;top:792px;width:2px;height:36px;background:#d3d3d3;"></div>
<div style="position:absolute;left:824.4px;top:792px;width:2px;height:36px;background:#d3d3d3;"></div>
<div style="position:absolute;left:853.3px;top:792px;width:2px;height:36px;background:#939393;"></div>
<div style="position:absolute;left:795.5px;top:828px;width:2px;height:36px;background:#d3d3d3;"></div>
<div style="position:absolute;left:824.4px;top:828px;width:2px;height:36px;background:#d3d3d3;"></div>
<div style="position:absolute;left:853.3px;top:828px;width:2px;height:36px;background:#939393;"></div>
<div style="position:absolute;left:795.5px;top:864px;width:2px;height:36px;background:#d3d3d3;"></div>
<div style="position:absolute;left:824.4px;top:864px;width:2px;height:36px;background:#d3d3d3;"></div>
<div style="position:absolute;left:853.3px;top:864px;width:2px;height:36px;background:#939393;"></div>
<div style="position:absolute;left:882.2px;top:864px;width:2px;height:36px;background:#d3d3d3;"></div>
<div style="position:absolute;left:795.5px;top:900px;width:2px;height:36px;background:#d3d3d3;"></div>
<div style="position:absolute;left:824.4px;top:900px;width:2px;height:36px;background:#d3d3d3;"></div>
<div style="position:absolute;left:853.3px;top:900px;width:2px;height:36px;background:#939393;"></div>
<div style="position:absolute;left:795.5px;top:936px;width:2px;height:36px;background:#d3d3d3;"></div>
<div style="position:absolute;left:824.4px;top:936px;width:2px;height:36px;background:#d3d3d3;"></div>
<div style="position:absolute;left:795.5px;top:972px;width:2px;height:36px;background:#d3d3d3;"></div>
<div style="position:absolute;left:795.5px;top:1008px;width:2px;height:36px;background:#d3d3d3;"></div>
<div style="position:absolute;left:795.5px;top:1044px;width:2px;height:36px;background:#d3d3d3;"></div>
<div style="position:absolute;left:795.5px;top:1080px;width:2px;height:36px;background:#d3d3d3;"></div>
<div style="position:absolute;left:824.4px;top:1080px;width:2px;height:36px;background:#d3d3d3;"></div>
<div style="position:absolute;left:795.5px;top:1116px;width:2px;height:36px;background:#d3d3d3;"></div>
<div style="position:absolute;left:824.4px;top:1116px;width:2px;height:36px;background:#d3d3d3;"></div>
<div style="position:absolute;left:853.3px;top:1116px;width:2px;height:36px;background:#d3d3d3;"></div>
<div style="position:absolute;left:795.5px;top:1152px;width:2px;height:36px;background:#d3d3d3;"></div>
<div style="position:absolute;left:824.4px;top:1152px;width:2px;height:36px;background:#d3d3d3;"></div>
<div style="position:absolute;left:853.3px;top:1152px;width:2px;height:36px;background:#d3d3d3;"></div>
<div style="position:absolute;left:795.5px;top:1188px;width:2px;height:36px;background:#d3d3d3;"></div>
<div style="position:absolute;left:824.4px;top:1188px;width:2px;height:36px;background:#d3d3d3;"></div>
<div style="position:absolute;left:853.3px;top:1188px;width:2px;height:36px;background:#d3d3d3;"></div>
<div style="position:absolute;left:882.2px;top:1188px;width:2px;height:36px;background:#d3d3d3;"></div>
<div style="position:absolute;left:795.5px;top:1224px;width:2px;height:36px;background:#d3d3d3;"></div>
<div style="position:absolute;left:824.4px;top:1224px;width:2px;height:36px;background:#d3d3d3;"></div>
<div style="position:absolute;left:853.3px;top:1224px;width:2px;height:36px;background:#d3d3d3;"></div>
<div style="position:absolute;left:882.2px;top:1224px;width:2px;height:36px;background:#d3d3d3;"></div>
<div style="position:absolute;left:795.5px;top:1260px;width:2px;height:36px;background:#d3d3d3;"></div>
<div style="position:absolute;left:824.4px;top:1260px;width:2px;height:36px;background:#d3d3d3;"></div>
<div style="position:absolute;left:853.3px;top:1260px;width:2px;height:36px;background:#d3d3d3;"></div>
<div style="position:absolute;left:882.2px;top:1260px;width:2px;height:36px;background:#d3d3d3;"></div>
<div style="position:absolute;left:795.5px;top:1296px;width:2px;height:36px;background:#d3d3d3;"></div>
<div style="position:absolute;left:824.4px;top:1296px;width:2px;height:36px;background:#d3d3d3;"></div>
<div style="position:absolute;left:853.3px;top:1296px;width:2px;height:36px;background:#d3d3d3;"></div>
<div style="position:absolute;left:795.5px;top:1332px;width:2px;height:36px;background:#d3d3d3;"></div>
<div style="position:absolute;left:824.4px;top:1332px;width:2px;height:36px;background:#d3d3d3;"></div>
<div style="position:absolute;left:795.5px;top:1368px;width:2px;height:36px;background:#d3d3d3;"></div>
<div style="position:absolute;left:824.4px;top:1368px;width:2px;height:36px;background:#d3d3d3;"></div>
<div style="position:absolute;left:853.3px;top:1368px;width:2px;height:36px;background:#d3d3d3;"></div>
<div style="position:absolute;left:795.5px;top:1404px;width:2px;height:36px;background:#d3d3d3;"></div>
<div style="position:absolute;left:824.4px;top:1404px;width:2px;height:36px;background:#d3d3d3;"></div>
<div style="position:absolute;left:853.3px;top:1404px;width:2px;height:36px;background:#d3d3d3;"></div>
<div style="position:absolute;left:795.5px;top:1440px;width:2px;height:36px;background:#d3d3d3;"></div>
<div style="position:absolute;left:824.4px;top:1440px;width:2px;height:36px;background:#d3d3d3;"></div>
<div style="position:absolute;left:853.3px;top:1440px;width:2px;height:36px;background:#d3d3d3;"></div>
<div style="position:absolute;left:795.5px;top:1476px;width:2px;height:36px;background:#d3d3d3;"></div>
<div style="position:absolute;left:824.4px;top:1476px;width:2px;height:36px;background:#d3d3d3;"></div>
<div style="position:absolute;left:853.3px;top:1476px;width:2px;height:36px;background:#d3d3d3;"></div>
<div style="position:absolute;left:795.5px;top:1512px;width:2px;height:36px;background:#d3d3d3;"></div>
<div style="position:absolute;left:824.4px;top:1512px;width:2px;height:36px;background:#d3d3d3;"></div>
<div style="position:absolute;left:853.3px;top:1512px;width:2px;height:36px;background:#d3d3d3;"></div>
<div style="position:absolute;left:882.2px;top:1512px;width:2px;height:36px;background:#d3d3d3;"></div>
<div style="position:absolute;left:795.5px;top:1548px;width:2px;height:36px;background:#d3d3d3;"></div>
<div style="position:absolute;left:824.4px;top:1548px;width:2px;height:36px;background:#d3d3d3;"></div>
<div style="position:absolute;left:853.3px;top:1548px;width:2px;height:36px;background:#d3d3d3;"></div>
<div style="position:absolute;left:882.2px;top:1548px;width:2px;height:36px;background:#d3d3d3;"></div>
<div style="position:absolute;left:911.1px;top:1548px;width:2px;height:36px;background:#d3d3d3;"></div>
<div style="position:absolute;left:795.5px;top:1584px;width:2px;height:36px;background:#d3d3d3;"></div>
<div style="position:absolute;left:824.4px;top:1584px;width:2px;height:36px;background:#d3d3d3;"></div>
<div style="position:absolute;left:853.3px;top:1584px;width:2px;height:36px;background:#d3d3d3;"></div>
<div style="position:absolute;left:882.2px;top:1584px;width:2px;height:36px;background:#d3d3d3;"></div>
<div style="position:absolute;left:911.1px;top:1584px;width:2px;height:36px;background:#d3d3d3;"></div>
<div style="position:absolute;left:940.0px;top:1584px;width:2px;height:36px;background:#d3d3d3;"></div>
<div style="position:absolute;left:795.5px;top:1620px;width:2px;height:36px;background:#d3d3d3;"></div>
<div style="position:absolute;left:824.4px;top:1620px;width:2px;height:36px;background:#d3d3d3;"></div>
<div style="position:absolute;left:853.3px;top:1620px;width:2px;height:36px;background:#d3d3d3;"></div>
<div style="position:absolute;left:882.2px;top:1620px;width:2px;height:36px;background:#d3d3d3;"></div>
<div style="position:absolute;left:911.1px;top:1620px;width:2px;height:36px;background:#d3d3d3;"></div>
<div style="position:absolute;left:940.0px;top:1620px;width:2px;height:36px;background:#d3d3d3;"></div>
<div style="position:absolute;left:795.5px;top:1656px;width:2px;height:36px;background:#d3d3d3;"></div>
<div style="position:absolute;left:824.4px;top:1656px;width:2px;height:36px;background:#d3d3d3;"></div>
<div style="position:absolute;left:853.3px;top:1656px;width:2px;height:36px;background:#d3d3d3;"></div>
<div style="position:absolute;left:882.2px;top:1656px;width:2px;height:36px;background:#d3d3d3;"></div>
<div style="position:absolute;left:911.1px;top:1656px;width:2px;height:36px;background:#d3d3d3;"></div>
<div style="position:absolute;left:940.0px;top:1656px;width:2px;height:36px;background:#d3d3d3;"></div>
<div style="position:absolute;left:795.5px;top:1692px;width:2px;height:36px;background:#d3d3d3;"></div>
<div style="position:absolute;left:824.4px;top:1692px;width:2px;height:36px;background:#d3d3d3;"></div>
<div style="position:absolute;left:853.3px;top:1692px;width:2px;height:36px;background:#d3d3d3;"></div>
<div style="position:absolute;left:882.2px;top:1692px;width:2px;height:36px;background:#d3d3d3;"></div>
<div style="position:absolute;left:911.1px;top:1692px;width:2px;height:36px;background:#d3d3d3;"></div>
<div style="position:absolute;left:940.0px;top:1692px;width:2px;height:36px;background:#d3d3d3;"></div>
<div style="position:absolute;left:795.5px;top:1728px;width:2px;height:36px;background:#d3d3d3;"></div>
<div style="position:absolute;left:824.4px;top:1728px;width:2px;height:36px;background:#d3d3d3;"></div>
<div style="position:absolute;left:853.3px;top:1728px;width:2px;height:36px;background:#d3d3d3;"></div>
<div style="position:absolute;left:882.2px;top:1728px;width:2px;height:36px;background:#d3d3d3;"></div>
<div style="position:absolute;left:911.1px;top:1728px;width:2px;height:36px;background:#d3d3d3;"></div>
<div style="position:absolute;left:795.5px;top:1764px;width:2px;height:36px;background:#d3d3d3;"></div>
<div style="position:absolute;left:824.4px;top:1764px;width:2px;height:36px;background:#d3d3d3;"></div>
<div style="position:absolute;left:853.3px;top:1764px;width:2px;height:36px;background:#d3d3d3;"></div>
<div style="position:absolute;left:882.2px;top:1764px;width:2px;height:36px;background:#d3d3d3;"></div>
<div style="position:absolute;left:911.1px;top:1764px;width:2px;height:36px;background:#d3d3d3;"></div>
<div style="position:absolute;left:344px;width:400px;text-align:right;top:139.62px;font:400 24px/48px 'Liberation Mono', monospace;color:#237893;white-space:pre;-webkit-text-stroke:0.2px;">126</div>
<div style="position:absolute;left:797px;top:175.62px;font:400 24px/48px 'Liberation Mono', monospace;color:#000000;white-space:pre;-webkit-text-stroke:0.2px;letter-spacing:0.05px;"><span style="color:#000000">  </span><span style="color:#795e26">useLayoutEffect</span><span style="color:#319331">(</span><span style="color:#7b3814">()</span><span style="color:#000000"> </span><span style="color:#0000ff">=&gt;</span><span style="color:#000000"> </span><span style="color:#7b3814">{</span></div>
<div style="position:absolute;left:344px;width:400px;text-align:right;top:175.62px;font:400 24px/48px 'Liberation Mono', monospace;color:#237893;white-space:pre;-webkit-text-stroke:0.2px;">127</div>
<div style="position:absolute;left:797px;top:211.62px;font:400 24px/48px 'Liberation Mono', monospace;color:#000000;white-space:pre;-webkit-text-stroke:0.2px;letter-spacing:0.05px;"><span style="color:#000000">    </span><span style="color:#0070c1">navigation</span><span style="color:#000000">.</span><span style="color:#795e26">setOptions</span><span style="color:#0431fa">(</span><span style="color:#319331">{</span></div>
<div style="position:absolute;left:344px;width:400px;text-align:right;top:211.62px;font:400 24px/48px 'Liberation Mono', monospace;color:#237893;white-space:pre;-webkit-text-stroke:0.2px;">128</div>
<div style="position:absolute;left:797px;top:247.62px;font:400 24px/48px 'Liberation Mono', monospace;color:#000000;white-space:pre;-webkit-text-stroke:0.2px;letter-spacing:0.05px;"><span style="color:#000000">      </span><span style="color:#001080">headerTitle</span><span style="color:#000000">: </span><span style="color:#0070c1">course</span><span style="color:#000000">?.</span><span style="color:#001080">title</span><span style="color:#000000"> || </span><span style="color:#a31515">&quot;Course Details&quot;</span><span style="color:#000000">,</span></div>
<div style="position:absolute;left:344px;width:400px;text-align:right;top:247.62px;font:400 24px/48px 'Liberation Mono', monospace;color:#237893;white-space:pre;-webkit-text-stroke:0.2px;">129</div>
<div style="position:absolute;left:797px;top:283.62px;font:400 24px/48px 'Liberation Mono', monospace;color:#000000;white-space:pre;-webkit-text-stroke:0.2px;letter-spacing:0.05px;"><span style="color:#000000">    </span><span style="color:#319331">}</span><span style="color:#0431fa">)</span><span style="color:#000000">;</span></div>
<div style="position:absolute;left:344px;width:400px;text-align:right;top:283.62px;font:400 24px/48px 'Liberation Mono', monospace;color:#237893;white-space:pre;-webkit-text-stroke:0.2px;">130</div>
<div style="position:absolute;left:797px;top:319.62px;font:400 24px/48px 'Liberation Mono', monospace;color:#000000;white-space:pre;-webkit-text-stroke:0.2px;letter-spacing:0.05px;"><span style="color:#000000">  </span><span style="color:#7b3814">}</span><span style="color:#000000">, </span><span style="color:#7b3814">[</span><span style="color:#0070c1">navigation</span><span style="color:#000000">, </span><span style="color:#0070c1">course</span><span style="color:#000000">.</span><span style="color:#001080">title</span><span style="color:#7b3814">]</span><span style="color:#319331">)</span><span style="color:#000000">;</span></div>
<div style="position:absolute;left:344px;width:400px;text-align:right;top:319.62px;font:400 24px/48px 'Liberation Mono', monospace;color:#237893;white-space:pre;-webkit-text-stroke:0.2px;">131</div>
<div style="position:absolute;left:344px;width:400px;text-align:right;top:355.62px;font:400 24px/48px 'Liberation Mono', monospace;color:#237893;white-space:pre;-webkit-text-stroke:0.2px;">132</div>
<div style="position:absolute;left:797px;top:391.62px;font:400 24px/48px 'Liberation Mono', monospace;color:#000000;white-space:pre;-webkit-text-stroke:0.2px;letter-spacing:0.05px;"><span style="color:#000000">  </span><span style="color:#0000ff">const</span><span style="color:#000000"> </span><span style="color:#795e26">LessonItem</span><span style="color:#000000"> = </span><span style="color:#319331">(</span><span style="color:#7b3814">{</span><span style="color:#000000"> </span><span style="color:#001080">lesson</span><span style="color:#000000"> </span><span style="color:#7b3814">}</span><span style="color:#000000">: </span><span style="color:#7b3814">{</span><span style="color:#000000"> </span><span style="color:#001080">lesson</span><span style="color:#000000">: </span><span style="color:#267f99">Lesson</span><span style="color:#000000"> </span><span style="color:#7b3814">}</span><span style="color:#319331">)</span><span style="color:#000000"> </span><span style="color:#0000ff">=&gt;</span><span style="color:#000000"> </span><span style="color:#319331">(</span></div>
<div style="position:absolute;left:344px;width:400px;text-align:right;top:391.62px;font:400 24px/48px 'Liberation Mono', monospace;color:#237893;white-space:pre;-webkit-text-stroke:0.2px;">133</div>
<div style="position:absolute;left:797px;top:427.62px;font:400 24px/48px 'Liberation Mono', monospace;color:#000000;white-space:pre;-webkit-text-stroke:0.2px;letter-spacing:0.05px;"><span style="color:#000000">    </span><span style="color:#800000">&lt;</span><span style="color:#267f99">TouchableOpacity</span></div>
<div style="position:absolute;left:344px;width:400px;text-align:right;top:427.62px;font:400 24px/48px 'Liberation Mono', monospace;color:#237893;white-space:pre;-webkit-text-stroke:0.2px;">134</div>
<div style="position:absolute;left:797px;top:463.62px;font:400 24px/48px 'Liberation Mono', monospace;color:#000000;white-space:pre;-webkit-text-stroke:0.2px;letter-spacing:0.05px;"><span style="color:#000000">      </span><span style="color:#e50000">style</span><span style="color:#000000">=</span><span style="color:#7b3814">{</span><span style="color:#0431fa">[</span></div>
<div style="position:absolute;left:344px;width:400px;text-align:right;top:463.62px;font:400 24px/48px 'Liberation Mono', monospace;color:#237893;white-space:pre;-webkit-text-stroke:0.2px;">135</div>
<div style="position:absolute;left:797px;top:499.62px;font:400 24px/48px 'Liberation Mono', monospace;color:#000000;white-space:pre;-webkit-text-stroke:0.2px;letter-spacing:0.05px;"><span style="color:#000000">        </span><span style="color:#0070c1">styles</span><span style="color:#000000">.</span><span style="color:#001080">lessonItem</span><span style="color:#000000">,</span></div>
<div style="position:absolute;left:344px;width:400px;text-align:right;top:499.62px;font:400 24px/48px 'Liberation Mono', monospace;color:#237893;white-space:pre;-webkit-text-stroke:0.2px;">136</div>
<div style="position:absolute;left:797px;top:535.62px;font:400 24px/48px 'Liberation Mono', monospace;color:#000000;white-space:pre;-webkit-text-stroke:0.2px;letter-spacing:0.05px;"><span style="color:#000000">        </span><span style="color:#0070c1">currentLesson</span><span style="color:#000000">?.</span><span style="color:#001080">id</span><span style="color:#000000"> === </span><span style="color:#001080">lesson</span><span style="color:#000000">.</span><span style="color:#001080">id</span><span style="color:#000000"> &amp;&amp; </span><span style="color:#0070c1">styles</span><span style="color:#000000">.</span><span style="color:#001080">activeLessonItem</span><span style="color:#000000">,</span></div>
<div style="position:absolute;left:344px;width:400px;text-align:right;top:535.62px;font:400 24px/48px 'Liberation Mono', monospace;color:#237893;white-space:pre;-webkit-text-stroke:0.2px;">137</div>
<div style="position:absolute;left:797px;top:571.62px;font:400 24px/48px 'Liberation Mono', monospace;color:#000000;white-space:pre;-webkit-text-stroke:0.2px;letter-spacing:0.05px;"><span style="color:#000000">      </span><span style="color:#0431fa">]</span><span style="color:#7b3814">}</span></div>
<div style="position:absolute;left:344px;width:400px;text-align:right;top:571.62px;font:400 24px/48px 'Liberation Mono', monospace;color:#237893;white-space:pre;-webkit-text-stroke:0.2px;">138</div>
<div style="position:absolute;left:797px;top:607.62px;font:400 24px/48px 'Liberation Mono', monospace;color:#000000;white-space:pre;-webkit-text-stroke:0.2px;letter-spacing:0.05px;"><span style="color:#000000">      </span><span style="color:#e50000">onPress</span><span style="color:#000000">=</span><span style="color:#7b3814">{</span><span style="color:#0431fa">()</span><span style="color:#000000"> </span><span style="color:#0000ff">=&gt;</span><span style="color:#000000"> </span><span style="color:#795e26">setCurrentLesson</span><span style="color:#0431fa">(</span><span style="color:#001080">lesson</span><span style="color:#0431fa">)</span><span style="color:#7b3814">}</span></div>
<div style="position:absolute;left:344px;width:400px;text-align:right;top:607.62px;font:400 24px/48px 'Liberation Mono', monospace;color:#237893;white-space:pre;-webkit-text-stroke:0.2px;">139</div>
<div style="position:absolute;left:797px;top:643.62px;font:400 24px/48px 'Liberation Mono', monospace;color:#000000;white-space:pre;-webkit-text-stroke:0.2px;letter-spacing:0.05px;"><span style="color:#000000">    </span><span style="color:#800000">&gt;</span></div>
<div style="position:absolute;left:344px;width:400px;text-align:right;top:643.62px;font:400 24px/48px 'Liberation Mono', monospace;color:#237893;white-space:pre;-webkit-text-stroke:0.2px;">140</div>
<div style="position:absolute;left:797px;top:679.62px;font:400 24px/48px 'Liberation Mono', monospace;color:#000000;white-space:pre;-webkit-text-stroke:0.2px;letter-spacing:0.05px;"><span style="color:#000000">      </span><span style="color:#800000">&lt;</span><span style="color:#267f99">View</span><span style="color:#000000"> </span><span style="color:#e50000">style</span><span style="color:#000000">=</span><span style="color:#7b3814">{</span><span style="color:#0070c1">styles</span><span style="color:#000000">.</span><span style="color:#001080">lessonInfo</span><span style="color:#7b3814">}</span><span style="color:#800000">&gt;</span></div>
<div style="position:absolute;left:344px;width:400px;text-align:right;top:679.62px;font:400 24px/48px 'Liberation Mono', monospace;color:#237893;white-space:pre;-webkit-text-stroke:0.2px;">141</div>
<div style="position:absolute;left:797px;top:715.62px;font:400 24px/48px 'Liberation Mono', monospace;color:#000000;white-space:pre;-webkit-text-stroke:0.2px;letter-spacing:0.05px;"><span style="color:#000000">        </span><span style="color:#800000">&lt;</span><span style="color:#267f99">Text</span><span style="color:#000000"> </span><span style="color:#e50000">style</span><span style="color:#000000">=</span><span style="color:#7b3814">{</span><span style="color:#0070c1">styles</span><span style="color:#000000">.</span><span style="color:#001080">lessonTitle</span><span style="color:#7b3814">}</span><span style="color:#800000">&gt;</span><span style="color:#7b3814">{</span><span style="color:#001080">lesson</span><span style="color:#000000">.</span><span style="color:#001080">title</span><span style="color:#7b3814">}</span><span style="color:#800000">&lt;/</span><span style="color:#267f99">Text</span><span style="color:#800000">&gt;</span></div>
<div style="position:absolute;left:344px;width:400px;text-align:right;top:715.62px;font:400 24px/48px 'Liberation Mono', monospace;color:#237893;white-space:pre;-webkit-text-stroke:0.2px;">142</div>
<div style="position:absolute;left:797px;top:751.62px;font:400 24px/48px 'Liberation Mono', monospace;color:#000000;white-space:pre;-webkit-text-stroke:0.2px;letter-spacing:0.05px;"><span style="color:#000000">        </span><span style="color:#800000">&lt;</span><span style="color:#267f99">Text</span><span style="color:#000000"> </span><span style="color:#e50000">style</span><span style="color:#000000">=</span><span style="color:#7b3814">{</span><span style="color:#0070c1">styles</span><span style="color:#000000">.</span><span style="color:#001080">lessonDuration</span><span style="color:#7b3814">}</span><span style="color:#800000">&gt;</span><span style="color:#7b3814">{</span><span style="color:#001080">lesson</span><span style="color:#000000">.</span><span style="color:#001080">duration</span><span style="color:#7b3814">}</span><span style="color:#800000">&lt;/</span><span style="color:#267f99">Text</span><span style="color:#800000">&gt;</span></div>
<div style="position:absolute;left:344px;width:400px;text-align:right;top:751.62px;font:400 24px/48px 'Liberation Mono', monospace;color:#237893;white-space:pre;-webkit-text-stroke:0.2px;">143</div>
<div style="position:absolute;left:797px;top:787.62px;font:400 24px/48px 'Liberation Mono', monospace;color:#000000;white-space:pre;-webkit-text-stroke:0.2px;letter-spacing:0.05px;"><span style="color:#000000">      </span><span style="color:#800000">&lt;/</span><span style="color:#267f99">View</span><span style="color:#800000">&gt;</span></div>
<div style="position:absolute;left:344px;width:400px;text-align:right;top:787.62px;font:400 24px/48px 'Liberation Mono', monospace;color:#237893;white-space:pre;-webkit-text-stroke:0.2px;">144</div>
<div style="position:absolute;left:797px;top:823.62px;font:400 24px/48px 'Liberation Mono', monospace;color:#000000;white-space:pre;-webkit-text-stroke:0.2px;letter-spacing:0.05px;"><span style="color:#000000">      </span><span style="color:#800000">&lt;</span><span style="color:#267f99">View</span><span style="color:#000000"> </span><span style="color:#e50000">style</span><span style="color:#000000">=</span><span style="color:#7b3814">{</span><span style="color:#0070c1">styles</span><span style="color:#000000">.</span><span style="color:#001080">playIconContainer</span><span style="color:#7b3814">}</span><span style="color:#800000">&gt;</span></div>
<div style="position:absolute;left:344px;width:400px;text-align:right;top:823.62px;font:400 24px/48px 'Liberation Mono', monospace;color:#237893;white-space:pre;-webkit-text-stroke:0.2px;">145</div>
<div style="position:absolute;left:797px;top:859.62px;font:400 24px/48px 'Liberation Mono', monospace;color:#000000;white-space:pre;-webkit-text-stroke:0.2px;letter-spacing:0.05px;"><span style="color:#000000">        </span><span style="color:#800000">&lt;</span><span style="color:#267f99">Text</span><span style="color:#000000"> </span><span style="color:#e50000">style</span><span style="color:#000000">=</span><span style="color:#7b3814">{</span><span style="color:#0070c1">styles</span><span style="color:#000000">.</span><span style="color:#001080">playIcon</span><span style="color:#7b3814">}</span><span style="color:#800000">&gt;</span><span style="color:#000000">▶</span><span style="color:#800000">&lt;/</span><span style="color:#267f99">Text</span><span style="color:#800000">&gt;</span></div>
<div style="position:absolute;left:344px;width:400px;text-align:right;top:859.62px;font:400 24px/48px 'Liberation Mono', monospace;color:#237893;white-space:pre;-webkit-text-stroke:0.2px;">146</div>
<div style="position:absolute;left:797px;top:895.62px;font:400 24px/48px 'Liberation Mono', monospace;color:#000000;white-space:pre;-webkit-text-stroke:0.2px;letter-spacing:0.05px;"><span style="color:#000000">      </span><span style="color:#800000">&lt;/</span><span style="color:#267f99">View</span><span style="color:#800000">&gt;</span></div>
<div style="position:absolute;left:344px;width:400px;text-align:right;top:895.62px;font:400 24px/48px 'Liberation Mono', monospace;color:#237893;white-space:pre;-webkit-text-stroke:0.2px;">147</div>
<div style="position:absolute;left:797px;top:931.62px;font:400 24px/48px 'Liberation Mono', monospace;color:#000000;white-space:pre;-webkit-text-stroke:0.2px;letter-spacing:0.05px;"><span style="color:#000000">    </span><span style="color:#800000">&lt;/</span><span style="color:#267f99">TouchableOpacity</span><span style="color:#800000">&gt;</span></div>
<div style="position:absolute;left:344px;width:400px;text-align:right;top:931.62px;font:400 24px/48px 'Liberation Mono', monospace;color:#0b216f;white-space:pre;-webkit-text-stroke:0.2px;">148</div>
<div style="position:absolute;left:797px;top:967.62px;font:400 24px/48px 'Liberation Mono', monospace;color:#000000;white-space:pre;-webkit-text-stroke:0.2px;letter-spacing:0.05px;"><span style="color:#000000">  </span><span style="color:#319331">)</span><span style="color:#000000">;</span></div>
<div style="position:absolute;left:344px;width:400px;text-align:right;top:967.62px;font:400 24px/48px 'Liberation Mono', monospace;color:#237893;white-space:pre;-webkit-text-stroke:0.2px;">149</div>
<div style="position:absolute;left:344px;width:400px;text-align:right;top:1003.62px;font:400 24px/48px 'Liberation Mono', monospace;color:#237893;white-space:pre;-webkit-text-stroke:0.2px;">150</div>
<div style="position:absolute;left:797px;top:1039.62px;font:400 24px/48px 'Liberation Mono', monospace;color:#000000;white-space:pre;-webkit-text-stroke:0.2px;letter-spacing:0.05px;"><span style="color:#000000">  </span><span style="color:#af00db">return</span><span style="color:#000000"> </span><span style="color:#319331">(</span></div>
<div style="position:absolute;left:344px;width:400px;text-align:right;top:1039.62px;font:400 24px/48px 'Liberation Mono', monospace;color:#237893;white-space:pre;-webkit-text-stroke:0.2px;">151</div>
<div style="position:absolute;left:797px;top:1075.62px;font:400 24px/48px 'Liberation Mono', monospace;color:#000000;white-space:pre;-webkit-text-stroke:0.2px;letter-spacing:0.05px;"><span style="color:#000000">    </span><span style="color:#800000">&lt;</span><span style="color:#267f99">ScrollView</span></div>
<div style="position:absolute;left:344px;width:400px;text-align:right;top:1075.62px;font:400 24px/48px 'Liberation Mono', monospace;color:#237893;white-space:pre;-webkit-text-stroke:0.2px;">152</div>
<div style="position:absolute;left:797px;top:1111.62px;font:400 24px/48px 'Liberation Mono', monospace;color:#000000;white-space:pre;-webkit-text-stroke:0.2px;letter-spacing:0.05px;"><span style="color:#000000">      </span><span style="color:#e50000">contentInsetAdjustmentBehavior</span><span style="color:#000000">=</span><span style="color:#a31515">&quot;automatic&quot;</span></div>
<div style="position:absolute;left:344px;width:400px;text-align:right;top:1111.62px;font:400 24px/48px 'Liberation Mono', monospace;color:#237893;white-space:pre;-webkit-text-stroke:0.2px;">153</div>
<div style="position:absolute;left:797px;top:1147.62px;font:400 24px/48px 'Liberation Mono', monospace;color:#000000;white-space:pre;-webkit-text-stroke:0.2px;letter-spacing:0.05px;"><span style="color:#000000">      </span><span style="color:#e50000">contentContainerStyle</span><span style="color:#000000">=</span><span style="color:#7b3814">{</span><span style="color:#0431fa">[</span></div>
<div style="position:absolute;left:344px;width:400px;text-align:right;top:1147.62px;font:400 24px/48px 'Liberation Mono', monospace;color:#237893;white-space:pre;-webkit-text-stroke:0.2px;">154</div>
<div style="position:absolute;left:797px;top:1183.62px;font:400 24px/48px 'Liberation Mono', monospace;color:#000000;white-space:pre;-webkit-text-stroke:0.2px;letter-spacing:0.05px;"><span style="color:#000000">        </span><span style="color:#0070c1">styles</span><span style="color:#000000">.</span><span style="color:#001080">container</span><span style="color:#000000">,</span></div>
<div style="position:absolute;left:344px;width:400px;text-align:right;top:1183.62px;font:400 24px/48px 'Liberation Mono', monospace;color:#237893;white-space:pre;-webkit-text-stroke:0.2px;">155</div>
<div style="position:absolute;left:797px;top:1219.62px;font:400 24px/48px 'Liberation Mono', monospace;color:#000000;white-space:pre;-webkit-text-stroke:0.2px;letter-spacing:0.05px;"><span style="color:#000000">        </span><span style="color:#319331">{</span><span style="color:#000000"> </span><span style="color:#001080">paddingTop</span><span style="color:#000000">: </span><span style="color:#267f99">Platform</span><span style="color:#000000">.</span><span style="color:#001080">OS</span><span style="color:#000000"> === </span><span style="color:#a31515">&quot;android&quot;</span><span style="color:#000000"> ? </span><span style="color:#0070c1">headerHeight</span><span style="color:#000000"> : </span><span style="color:#098658">0</span><span style="color:#000000"> </span><span style="color:#319331">}</span><span style="color:#000000">,</span></div>
<div style="position:absolute;left:344px;width:400px;text-align:right;top:1219.62px;font:400 24px/48px 'Liberation Mono', monospace;color:#237893;white-space:pre;-webkit-text-stroke:0.2px;">156</div>
<div style="position:absolute;left:797px;top:1255.62px;font:400 24px/48px 'Liberation Mono', monospace;color:#000000;white-space:pre;-webkit-text-stroke:0.2px;letter-spacing:0.05px;"><span style="color:#000000">        </span><span style="color:#319331">{</span><span style="color:#000000"> </span><span style="color:#001080">paddingLeft</span><span style="color:#000000">: </span><span style="color:#0070c1">insets</span><span style="color:#000000">.</span><span style="color:#001080">left</span><span style="color:#000000">, </span><span style="color:#001080">paddingRight</span><span style="color:#000000">: </span><span style="color:#0070c1">insets</span><span style="color:#000000">.</span><span style="color:#001080">right</span><span style="color:#000000"> </span><span style="color:#319331">}</span><span style="color:#000000">,</span></div>
<div style="position:absolute;left:344px;width:400px;text-align:right;top:1255.62px;font:400 24px/48px 'Liberation Mono', monospace;color:#237893;white-space:pre;-webkit-text-stroke:0.2px;">157</div>
<div style="position:absolute;left:797px;top:1291.62px;font:400 24px/48px 'Liberation Mono', monospace;color:#000000;white-space:pre;-webkit-text-stroke:0.2px;letter-spacing:0.05px;"><span style="color:#000000">      </span><span style="color:#0431fa">]</span><span style="color:#7b3814">}</span></div>
<div style="position:absolute;left:344px;width:400px;text-align:right;top:1291.62px;font:400 24px/48px 'Liberation Mono', monospace;color:#237893;white-space:pre;-webkit-text-stroke:0.2px;">158</div>
<div style="position:absolute;left:797px;top:1327.62px;font:400 24px/48px 'Liberation Mono', monospace;color:#000000;white-space:pre;-webkit-text-stroke:0.2px;letter-spacing:0.05px;"><span style="color:#000000">    </span><span style="color:#800000">&gt;</span></div>
<div style="position:absolute;left:344px;width:400px;text-align:right;top:1327.62px;font:400 24px/48px 'Liberation Mono', monospace;color:#237893;white-space:pre;-webkit-text-stroke:0.2px;">159</div>
<div style="position:absolute;left:797px;top:1363.62px;font:400 24px/48px 'Liberation Mono', monospace;color:#000000;white-space:pre;-webkit-text-stroke:0.2px;letter-spacing:0.05px;"><span style="color:#000000">      </span><span style="color:#800000">&lt;</span><span style="color:#267f99">StatusBar</span><span style="color:#000000"> </span><span style="color:#e50000">style</span><span style="color:#000000">=</span><span style="color:#a31515">&quot;light&quot;</span><span style="color:#000000"> </span><span style="color:#800000">/&gt;</span></div>
<div style="position:absolute;left:344px;width:400px;text-align:right;top:1363.62px;font:400 24px/48px 'Liberation Mono', monospace;color:#237893;white-space:pre;-webkit-text-stroke:0.2px;">160</div>
<div style="position:absolute;left:344px;width:400px;text-align:right;top:1399.62px;font:400 24px/48px 'Liberation Mono', monospace;color:#237893;white-space:pre;-webkit-text-stroke:0.2px;">161</div>
<div style="position:absolute;left:797px;top:1435.62px;font:400 24px/48px 'Liberation Mono', monospace;color:#000000;white-space:pre;-webkit-text-stroke:0.2px;letter-spacing:0.05px;"><span style="color:#000000">      </span><span style="color:#7b3814">{</span><span style="color:#008000">/* Video Player */</span><span style="color:#7b3814">}</span></div>
<div style="position:absolute;left:344px;width:400px;text-align:right;top:1435.62px;font:400 24px/48px 'Liberation Mono', monospace;color:#237893;white-space:pre;-webkit-text-stroke:0.2px;">162</div>
<div style="position:absolute;left:797px;top:1471.62px;font:400 24px/48px 'Liberation Mono', monospace;color:#000000;white-space:pre;-webkit-text-stroke:0.2px;letter-spacing:0.05px;"><span style="color:#000000">      </span><span style="color:#7b3814">{</span><span style="color:#0070c1">currentLesson</span><span style="color:#000000"> &amp;&amp; </span><span style="color:#0431fa">(</span></div>
<div style="position:absolute;left:344px;width:400px;text-align:right;top:1471.62px;font:400 24px/48px 'Liberation Mono', monospace;color:#237893;white-space:pre;-webkit-text-stroke:0.2px;">163</div>
<div style="position:absolute;left:797px;top:1507.62px;font:400 24px/48px 'Liberation Mono', monospace;color:#000000;white-space:pre;-webkit-text-stroke:0.2px;letter-spacing:0.05px;"><span style="color:#000000">        </span><span style="color:#800000">&lt;</span><span style="color:#267f99">View</span><span style="color:#000000"> </span><span style="color:#e50000">style</span><span style="color:#000000">=</span><span style="color:#319331">{</span><span style="color:#0070c1">styles</span><span style="color:#000000">.</span><span style="color:#001080">videoContainer</span><span style="color:#319331">}</span><span style="color:#800000">&gt;</span></div>
<div style="position:absolute;left:344px;width:400px;text-align:right;top:1507.62px;font:400 24px/48px 'Liberation Mono', monospace;color:#237893;white-space:pre;-webkit-text-stroke:0.2px;">164</div>
<div style="position:absolute;left:797px;top:1543.62px;font:400 24px/48px 'Liberation Mono', monospace;color:#000000;white-space:pre;-webkit-text-stroke:0.2px;letter-spacing:0.05px;"><span style="color:#000000">          </span><span style="color:#800000">&lt;</span><span style="color:#267f99">VideoView</span></div>
<div style="position:absolute;left:344px;width:400px;text-align:right;top:1543.62px;font:400 24px/48px 'Liberation Mono', monospace;color:#237893;white-space:pre;-webkit-text-stroke:0.2px;">165</div>
<div style="position:absolute;left:797px;top:1579.62px;font:400 24px/48px 'Liberation Mono', monospace;color:#000000;white-space:pre;-webkit-text-stroke:0.2px;letter-spacing:0.05px;"><span style="color:#000000">            </span><span style="color:#e50000">style</span><span style="color:#000000">=</span><span style="color:#319331">{</span><span style="color:#0070c1">styles</span><span style="color:#000000">.</span><span style="color:#001080">video</span><span style="color:#319331">}</span></div>
<div style="position:absolute;left:344px;width:400px;text-align:right;top:1579.62px;font:400 24px/48px 'Liberation Mono', monospace;color:#237893;white-space:pre;-webkit-text-stroke:0.2px;">166</div>
<div style="position:absolute;left:797px;top:1615.62px;font:400 24px/48px 'Liberation Mono', monospace;color:#000000;white-space:pre;-webkit-text-stroke:0.2px;letter-spacing:0.05px;"><span style="color:#000000">            </span><span style="color:#e50000">player</span><span style="color:#000000">=</span><span style="color:#319331">{</span><span style="color:#0070c1">player</span><span style="color:#319331">}</span></div>
<div style="position:absolute;left:344px;width:400px;text-align:right;top:1615.62px;font:400 24px/48px 'Liberation Mono', monospace;color:#237893;white-space:pre;-webkit-text-stroke:0.2px;">167</div>
<div style="position:absolute;left:797px;top:1651.62px;font:400 24px/48px 'Liberation Mono', monospace;color:#000000;white-space:pre;-webkit-text-stroke:0.2px;letter-spacing:0.05px;"><span style="color:#000000">            </span><span style="color:#e50000">allowsFullscreen</span></div>
<div style="position:absolute;left:344px;width:400px;text-align:right;top:1651.62px;font:400 24px/48px 'Liberation Mono', monospace;color:#237893;white-space:pre;-webkit-text-stroke:0.2px;">168</div>
<div style="position:absolute;left:797px;top:1687.62px;font:400 24px/48px 'Liberation Mono', monospace;color:#000000;white-space:pre;-webkit-text-stroke:0.2px;letter-spacing:0.05px;"><span style="color:#000000">            </span><span style="color:#e50000">allowsPictureInPicture</span></div>
<div style="position:absolute;left:344px;width:400px;text-align:right;top:1687.62px;font:400 24px/48px 'Liberation Mono', monospace;color:#237893;white-space:pre;-webkit-text-stroke:0.2px;">169</div>
<div style="position:absolute;left:797px;top:1723.62px;font:400 24px/48px 'Liberation Mono', monospace;color:#000000;white-space:pre;-webkit-text-stroke:0.2px;letter-spacing:0.05px;"><span style="color:#000000">          </span><span style="color:#800000">/&gt;</span></div>
<div style="position:absolute;left:344px;width:400px;text-align:right;top:1723.62px;font:400 24px/48px 'Liberation Mono', monospace;color:#237893;white-space:pre;-webkit-text-stroke:0.2px;">170</div>
<div style="position:absolute;left:797px;top:1759.62px;font:400 24px/48px 'Liberation Mono', monospace;color:#000000;white-space:pre;-webkit-text-stroke:0.2px;letter-spacing:0.05px;"><span style="color:#000000">          </span><span style="color:#800000">&lt;</span><span style="color:#267f99">Text</span><span style="color:#000000"> </span><span style="color:#e50000">style</span><span style="color:#000000">=</span><span style="color:#319331">{</span><span style="color:#0070c1">styles</span><span style="color:#000000">.</span><span style="color:#001080">currentLessonTitle</span><span style="color:#319331">}</span><span style="color:#800000">&gt;</span><span style="color:#319331">{</span><span style="color:#0070c1">currentLesson</span><span style="color:#000000">.</span><span style="color:#001080">title</span><span style="color:#319331">}</span><span style="color:#800000">&lt;/</span></div>
<div style="position:absolute;left:344px;width:400px;text-align:right;top:1759.62px;font:400 24px/48px 'Liberation Mono', monospace;color:#237893;white-space:pre;-webkit-text-stroke:0.2px;">171</div>
</div></div>
<div style="position:absolute;left:664px;top:118px;width:1210px;height:36px;background:#ffffff;box-shadow:0 3px 5px -1px rgba(0,0,0,0.16);"></div>
<div style="position:absolute;left:344px;width:400px;text-align:right;top:113.62px;font:400 24px/48px 'Liberation Mono', monospace;color:#237893;white-space:pre;-webkit-text-stroke:0.2px;">94</div>
<div style="position:absolute;left:797px;top:113.62px;font:400 24px/48px 'Liberation Mono', monospace;color:#000000;white-space:pre;-webkit-text-stroke:0.2px;letter-spacing:0.05px;"><span style="color:#af00db">export</span><span style="color:#000000"> </span><span style="color:#af00db">default</span><span style="color:#000000"> </span><span style="color:#0000ff">function</span><span style="color:#000000"> </span><span style="color:#795e26">CourseDetail</span><span style="color:#0431fa">()</span><span style="color:#000000"> </span><span style="color:#0431fa">{</span></div>
<div style="position:absolute;left:1878px;top:118px;width:1px;height:1662px;background:#e8e8e8;"></div>
<div style="position:absolute;left:1879px;top:770px;width:27px;height:222px;background:rgba(100,100,100,0.38);"></div>
<div style="position:absolute;left:1879px;top:876px;width:27px;height:3px;background:#505050;"></div>
<div style="position:absolute;left:1888px;top:1125px;width:9px;height:12px;background:#1e1e1e;"></div>
<div style="position:absolute;left:1888px;top:1154px;width:9px;height:12px;background:#1e1e1e;"></div>
<div style="position:absolute;left:1888px;top:1255px;width:9px;height:12px;background:#a0a4ab;"></div>
<div style="position:absolute;left:1888px;top:1377px;width:9px;height:12px;background:#1e1e1e;"></div>
<div style="position:absolute;left:1888px;top:1406px;width:9px;height:12px;background:#3b6fe0;"></div>
<div style="position:absolute;left:1888px;top:1476px;width:9px;height:12px;background:#a0a4ab;"></div>
<div style="position:absolute;left:1947px;top:17.38px;font:400 22px/44px 'Liberation Sans', sans-serif;color:#6f6f6f;white-space:pre;-webkit-text-stroke:0.3px #6f6f6f;letter-spacing:-0.085px;">CHAT</div>
<div style="position:absolute;left:2054px;top:17.38px;font:400 22px/44px 'Liberation Sans', sans-serif;color:#333333;white-space:pre;-webkit-text-stroke:0.3px #333333;letter-spacing:-0.342px;">RADON IDE</div>
<div style="position:absolute;left:2050px;top:60px;width:128px;height:2.5px;background:#3c3c3c;"></div>
<svg style="position:absolute;left:2862px;top:24px;" width="28" height="28" viewBox="0 0 28 28"><g fill="none" stroke="#3c3c3c" stroke-width="2.2"><path d="M8.5 7.5 A11.5 11.5 0 1 0 19.5 7.5"/><path d="M14 1 V12"/></g></svg>
<svg style="position:absolute;left:2913px;top:26px;" width="26" height="26" viewBox="0 0 26 26"><g fill="none" stroke="#3c3c3c" stroke-width="2.2"><path d="M1 8 V1 H8 M18 1 H25 V8 M25 18 V25 H18 M8 25 H1 V18"/></g></svg>
<svg style="position:absolute;left:2968px;top:30px;" width="20" height="18" viewBox="0 0 20 18"><path d="M1.5 1 L17.5 17 M17.5 1 L1.5 17" stroke="#3c3c3c" stroke-width="2.2"/></svg>
<svg style="position:absolute;left:1938px;top:110px;" width="28" height="24" viewBox="0 0 28 24"><g fill="none" stroke="#3c3c3c" stroke-width="2.2"><path d="M26 11 H3 M12 1.5 L2.5 11 L12 20.5"/></g></svg>
<svg style="position:absolute;left:1992px;top:104px;" width="30" height="30" viewBox="0 0 30 30"><g fill="none" stroke="#3c3c3c" stroke-width="2.2"><path d="M17.5 5.3 A11.3 11.3 0 1 1 8 6.5"/><path d="M2.1 4.5 H9.1 V11.6"/></g></svg>
<svg style="position:absolute;left:2027px;top:115px;" width="17" height="10" viewBox="0 0 17 10"><path d="M0.5 0.5 H16 L8.2 9 Z" fill="#3c3c3c"/></svg>
<div style="position:absolute;left:2058px;top:90px;width:520px;height:60px;background:#ffffff;border-radius:30px;"></div>
<div style="position:absolute;left:2082px;top:97.99px;font:400 26px/52px 'Liberation Sans', sans-serif;color:#616161;white-space:pre;-webkit-text-stroke:0.3px #616161;">/</div>
<svg style="position:absolute;left:2710px;top:95px;" width="60" height="50" viewBox="0 0 60 50"><g stroke-linecap="round" fill="none">
<path d="M15.3 36.2 L27.2 24.6" stroke="#3c3c3c" stroke-width="5.6"/><path d="M15.3 36.2 L27.2 24.6" stroke="#f3f3f3" stroke-width="1.4"/>
<path d="M27.8 29.2 L34.6 36.2" stroke="#3c3c3c" stroke-width="5.6"/><path d="M27.8 29.2 L34.6 36.2" stroke="#f3f3f3" stroke-width="1.4"/>
<path d="M34.5 12.2 Q31 11 28.3 13 Q25 16.2 26.2 20.5 Q27.3 24.5 31.5 25.3 Q36 26 38.5 22.5 Q40 20.2 39.3 17.2 L34.6 21.2 L31 17.6 Z" stroke="#3c3c3c" stroke-width="2.2" stroke-linejoin="round"/>
<path d="M12.6 15.8 L14.6 13.5 L19.8 17.2 L21.2 21.8 L16.6 20.8 Z" stroke="#3c3c3c" stroke-width="2.2" stroke-linejoin="round"/>
<path d="M20.3 21.3 L23 24" stroke="#3c3c3c" stroke-width="2.2"/>
</g></svg>
<svg style="position:absolute;left:2781px;top:108px;" width="34" height="24" viewBox="0 0 34 24"><g fill="none" stroke="#3c3c3c" stroke-width="2.2" stroke-linejoin="round"><rect x="1.5" y="2.5" width="21" height="19" rx="3"/><path d="M23 9 L31 4 V20 L23 15"/></g></svg>
<svg style="position:absolute;left:2841px;top:106px;" width="30" height="26" viewBox="0 0 30 26"><g fill="none" stroke="#3c3c3c" stroke-width="2.2"><path d="M2 5 H9 L11 2 H18 L20 5 H28 V23 H2 Z"/><circle cx="15" cy="14" r="5"/></g><circle cx="6" cy="9" r="1.2" fill="#3c3c3c"/></svg>
<svg style="position:absolute;left:2898px;top:104px;" width="34" height="34" viewBox="0 0 34 34"><g fill="none" stroke="#3c3c3c" stroke-width="2.2" stroke-linejoin="round"><path d="M12 11 V4 H30 V26 H22"/><path d="M18 10 L22 15 L18 20"/><ellipse cx="9" cy="25" rx="5" ry="6.5"/><path d="M4 25 H0.5 M14 25 H17.5 M5 20 L2 17 M13 20 L16 17 M5 30 L2 33 M13 30 L16 33 M6 19 Q9 15 12 19"/></g></svg>
<div style="position:absolute;left:2924px;top:92px;width:20px;height:20px;background:#0078d4;border-radius:10px;"></div>
<svg style="position:absolute;left:2958px;top:102px;" width="36" height="36" viewBox="0 0 36 36"><polygon points="15.14,6.86 15.50,2.20 20.50,2.20 20.86,6.86 23.85,8.10 27.40,5.06 30.94,8.60 27.90,12.15 29.14,15.14 33.80,15.50 33.80,20.50 29.14,20.86 27.90,23.85 30.94,27.40 27.40,30.94 23.85,27.90 20.86,29.14 20.50,33.80 15.50,33.80 15.14,29.14 12.15,27.90 8.60,30.94 5.06,27.40 8.10,23.85 6.86,20.86 2.20,20.50 2.20,15.50 6.86,15.14 8.10,12.15 5.06,8.60 8.60,5.06 12.15,8.10" fill="none" stroke="#3c3c3c" stroke-width="2.2" stroke-linejoin="miter"/><circle cx="18" cy="18" r="4.5" fill="none" stroke="#3c3c3c" stroke-width="2.2"/></svg>
<div style="position:absolute;left:1923.5px;top:178px;width:1081px;height:1497px;background:#000000;border-radius:92px;box-sizing:border-box;border:6.5px solid #343434;"></div>
<div style="position:absolute;left:2009px;top:243.80px;font:500 15px/30px 'Liberation Sans', sans-serif;color:#ffffff;white-space:pre;letter-spacing:-0.877px;">1:52 PM</div>
<div style="position:absolute;left:2072px;top:243.80px;font:500 15px/30px 'Liberation Sans', sans-serif;color:#ffffff;white-space:pre;letter-spacing:-0.129px;">Fri Aug 8</div>
<div style="position:absolute;left:2450.8px;top:255.8px;width:6.4px;height:6.4px;background:#8a8a8a;border-radius:4px;"></div>
<div style="position:absolute;left:2460.3px;top:255.8px;width:6.4px;height:6.4px;background:#8a8a8a;border-radius:4px;"></div>
<div style="position:absolute;left:2469.8px;top:255.8px;width:6.4px;height:6.4px;background:#8a8a8a;border-radius:4px;"></div>
<svg style="position:absolute;left:2825px;top:252px;" width="18" height="14" viewBox="0 0 18 14"><path d="M9 13.5 L6.6 11 Q9 9 11.4 11 Z M4.2 8.6 Q9 4.5 13.8 8.6 L12.4 10 Q9 7 5.6 10 Z M1.5 6 Q9 -1 16.5 6 L15.1 7.4 Q9 2 2.9 7.4 Z" fill="#ffffff"/></svg>
<div style="position:absolute;left:2846.6px;top:243.98px;font:500 14.5px/29.0px 'Liberation Sans', sans-serif;color:#ffffff;white-space:pre;letter-spacing:-0.096px;">100%</div>
<div style="position:absolute;left:2889px;top:252px;width:27.5px;height:13.5px;background:transparent;box-sizing:border-box;border:1.6px solid #9a9a9a;border-radius:4px;"></div>
<div style="position:absolute;left:2891.5px;top:254.5px;width:22.5px;height:8.5px;background:#ffffff;border-radius:2px;"></div>
<div style="position:absolute;left:2917.5px;top:256.5px;width:1.8px;height:5px;background:#9a9a9a;border-radius:0 1px 1px 0;"></div>
<div style="position:absolute;left:2013px;top:321.33px;font:700 38px/76px 'Liberation Sans', sans-serif;color:#ffffff;white-space:pre;letter-spacing:-0.033px;">Video Courses</div>
<div style="position:absolute;left:2013px;top:406.26px;font:400 18px/36px 'Liberation Sans', sans-serif;color:#9a9a9a;white-space:pre;letter-spacing:-0.171px;">Master React Native Development</div>
<div style="position:absolute;left:2013px;top:461.22px;font:700 21px/42px 'Liberation Sans', sans-serif;color:#ffffff;white-space:pre;letter-spacing:0.030px;">Featured Courses</div>
<div style="position:absolute;left:2013px;top:518px;width:901px;height:379px;border-radius:10px;overflow:hidden;background:#1f1f1f;">
<div style="position:absolute;left:0;top:0;width:901px;height:208px;overflow:hidden;"><svg width="901" height="208" viewBox="0 0 901 208" style="position:absolute;left:0;top:0;"><defs><filter id="bl415" x="-10%" y="-10%" width="120%" height="120%"><feGaussianBlur stdDeviation="4"/></filter></defs><g filter="url(#bl415)">
<rect x="-20" y="-20" width="941" height="250" fill="#0b0a08"/>
<ellipse cx="150" cy="125" rx="170" ry="40" fill="#15150e"/>
<ellipse cx="720" cy="122" rx="150" ry="38" fill="#16170f"/>
<ellipse cx="90" cy="120" rx="50" ry="18" fill="#1e1f14"/>
<ellipse cx="250" cy="128" rx="40" ry="18" fill="#1c1d13"/>
<ellipse cx="700" cy="118" rx="40" ry="18" fill="#1f2015"/>
<ellipse cx="60" cy="148" rx="90" ry="10" fill="#4a3a26"/>
<ellipse cx="680" cy="148" rx="80" ry="10" fill="#463724"/>
<rect x="-10" y="154" width="300" height="40" fill="#8e6c48"/>
<rect x="-10" y="156" width="300" height="14" fill="#b08a5c"/>
<rect x="-10" y="192" width="300" height="30" fill="#3a2b1e"/>
<rect x="595" y="154" width="165" height="40" fill="#8a6a46"/>
<rect x="595" y="156" width="165" height="14" fill="#a88458"/>
<rect x="595" y="192" width="165" height="30" fill="#35281c"/>
<rect x="760" y="150" width="160" height="70" fill="#181a12"/>
<rect x="770" y="140" width="130" height="8" fill="#7a7a72"/>
<path d="M0 0 H50 L56 62 H0 Z" fill="#77706a"/>
<rect x="0" y="0" width="44" height="18" fill="#e6dccc"/>
<ellipse cx="149" cy="54" rx="26" ry="9" fill="#e2d8c6"/>
<path d="M562 0 H606 L612 55 H554 Z" fill="#d2c2a2"/>
<path d="M624 0 H684 L692 52 H616 Z" fill="#eadcbe"/>
<rect x="661" y="52" width="3" height="120" fill="#5a4a34"/>
<path d="M272 208 Q282 120 328 86 Q378 62 420 62 L470 62 Q522 65 572 92 Q604 122 608 208 Z" fill="#121212"/>
<path d="M370 62 Q432 100 500 62 L480 42 H395 Z" fill="#1a1a1a"/>
<ellipse cx="432" cy="14" rx="52" ry="62" fill="#a88070"/>
<ellipse cx="432" cy="24" rx="38" ry="40" fill="#c29a88"/>
<rect x="392" y="-2" width="34" height="18" rx="3" fill="none" stroke="#161616" stroke-width="5"/>
<rect x="440" y="-2" width="34" height="18" rx="3" fill="none" stroke="#161616" stroke-width="5"/>
<path d="M520 136 L568 142 L572 162 L522 156 Z" fill="none" stroke="#e0e0e0" stroke-width="2.2"/>
</g></svg></div>
</div>
<div style="position:absolute;left:2013px;top:921.6px;width:901px;height:379px;border-radius:10px;overflow:hidden;background:#1f1f1f;">
<div style="position:absolute;left:0;top:0;width:901px;height:207px;overflow:hidden;"><svg width="901" height="208" viewBox="0 0 901 208" style="position:absolute;left:0;top:0;"><defs><filter id="bl418" x="-10%" y="-10%" width="120%" height="120%"><feGaussianBlur stdDeviation="4"/></filter></defs><g filter="url(#bl418)">
<defs><linearGradient id="lav" x1="0" y1="0" x2="0.2" y2="1"><stop offset="0" stop-color="#8e86a8"/><stop offset="1" stop-color="#9a8cce"/></linearGradient></defs>
<rect x="-20" y="-20" width="941" height="250" fill="#8c8482"/>
<rect x="520" y="-20" width="400" height="250" fill="url(#lav)"/>
<rect x="789" y="-20" width="21" height="250" fill="#16161c"/>
<rect x="810" y="-20" width="110" height="250" fill="#9690c4"/>
<path d="M815 208 Q815 140 850 100 Q880 80 910 85 V208 Z" fill="#2c4c1c"/>
<ellipse cx="860" cy="15" rx="25" ry="20" fill="#98b442"/>
<ellipse cx="885" cy="65" rx="22" ry="22" fill="#8aac3c"/>
<ellipse cx="870" cy="150" rx="30" ry="22" fill="#6a9a30"/>
<ellipse cx="40" cy="25" rx="60" ry="40" fill="#3a6018"/>
<ellipse cx="110" cy="15" rx="35" ry="25" fill="#4a7226"/>
<ellipse cx="80" cy="170" rx="70" ry="45" fill="#487424"/>
<ellipse cx="230" cy="80" rx="70" ry="85" fill="#4a7828"/>
<ellipse cx="290" cy="30" rx="55" ry="35" fill="#3e6a1c"/>
<ellipse cx="130" cy="80" rx="20" ry="25" fill="#5a7a34"/>
<rect x="150" y="130" width="95" height="80" fill="#5a4a46"/>
<ellipse cx="230" cy="115" rx="40" ry="45" fill="#4c7a28"/>
<path d="M244 208 Q300 175 332 118 Q352 50 362 8 Q372 -14 455 -14 Q538 -14 546 10 Q556 60 566 115 Q585 175 608 208 Z" fill="#7a5842"/>
<ellipse cx="455" cy="68" rx="82" ry="104" fill="#d8ae9e"/>
<ellipse cx="455" cy="60" rx="64" ry="80" fill="#e6bcaa"/>
<path d="M244 208 Q262 176 310 166 L390 162 L405 208 Z" fill="#ece6e0"/>
<ellipse cx="424" cy="50" rx="12" ry="5" fill="#7a808e"/>
<ellipse cx="490" cy="50" rx="12" ry="5" fill="#7a808e"/>
<ellipse cx="455" cy="120" rx="28" ry="10" fill="#c4948c"/>
</g></svg></div>
</div>
<div style="position:absolute;left:2013px;top:1324.5px;width:901px;height:282.5px;border-radius:10px 10px 0 0;overflow:hidden;background:#1f1f1f;">
<div style="position:absolute;left:0;top:0;width:901px;height:208px;overflow:hidden;"><svg width="901" height="208" viewBox="0 0 901 208" style="position:absolute;left:0;top:0;"><defs><filter id="bl421" x="-10%" y="-10%" width="120%" height="120%"><feGaussianBlur stdDeviation="4"/></filter></defs><g filter="url(#bl421)">
<rect x="-20" y="-20" width="941" height="250" fill="#6a62b6"/>
<rect x="-20" y="-20" width="324" height="160" fill="#6c64ae"/>
<rect x="304" y="-20" width="300" height="150" fill="#7068b6"/>
<path d="M-10 152 L391 126 L900 100" stroke="#7e78e0" stroke-width="5" fill="none"/>
<path d="M-20 160 L904 110 V230 H-20 Z" fill="#6660c0"/>
<path d="M304 0 V208" stroke="#5e58a8" stroke-width="3"/>
<path d="M40 118 Q70 100 95 150 Q60 150 40 118 Z" fill="#3a6a20"/>
<ellipse cx="157" cy="175" rx="20" ry="25" fill="#5a8a30"/>
<rect x="70" y="180" width="70" height="28" fill="#5a70c8"/>
<rect x="592" y="-20" width="330" height="250" fill="#3c5c34"/>
<ellipse cx="620" cy="60" rx="30" ry="60" fill="#6a64c0"/>
<ellipse cx="640" cy="160" rx="35" ry="40" fill="#5c58b8"/>
<ellipse cx="650" cy="25" rx="28" ry="20" fill="#6a9040"/>
<ellipse cx="615" cy="110" rx="22" ry="18" fill="#7a9a50"/>
<ellipse cx="720" cy="60" rx="35" ry="45" fill="#4c7a2c"/>
<ellipse cx="790" cy="120" rx="70" ry="85" fill="#2e4e1e"/>
<ellipse cx="740" cy="160" rx="40" ry="40" fill="#4a7a2a"/>
<ellipse cx="860" cy="60" rx="35" ry="50" fill="#345a24"/>
<ellipse cx="890" cy="150" rx="20" ry="50" fill="#5450b0"/>
<rect x="631" y="-20" width="8" height="250" fill="#1c1a48"/>
<path d="M272 208 Q288 168 372 152 L540 152 Q600 168 612 208 Z" fill="#d8d4de"/>
<path d="M366 152 Q452 220 544 152 L524 146 Q452 200 386 146 Z" fill="#1e2052"/>
<ellipse cx="445" cy="72" rx="76" ry="92" fill="#c49684"/>
<ellipse cx="445" cy="82" rx="56" ry="64" fill="#d0a694"/>
<path d="M372 40 Q376 -14 445 -14 Q514 -14 518 40 L508 10 Q445 -4 382 10 Z" fill="#3e3028"/>
<ellipse cx="412" cy="52" rx="11" ry="4" fill="#3a2a20"/>
<ellipse cx="478" cy="52" rx="11" ry="4" fill="#3a2a20"/>
</g></svg></div>
</div>
<div style="position:absolute;left:2036.4px;top:742.54px;font:700 19.5px/39.0px 'Liberation Sans', sans-serif;color:#ffffff;white-space:pre;letter-spacing:-0.224px;">React Native Animations</div>
<div style="position:absolute;left:2036.4px;top:774.83px;font:400 15.5px/31.0px 'Liberation Sans', sans-serif;color:#9a9a9a;white-space:pre;letter-spacing:0.166px;">by Tomasz Zawadzki</div>
<div style="position:absolute;left:2036.4px;top:808.13px;font:400 15.5px/31.0px 'Liberation Sans', sans-serif;color:#e0e0e0;white-space:pre;letter-spacing:0.153px;">Create smooth, performant animations using Reanimated and Gesture Handler.</div>
<div style="position:absolute;left:2036.4px;top:848.80px;font:400 15px/30px 'Liberation Sans', sans-serif;color:#9a9a9a;white-space:pre;letter-spacing:-0.327px;">4h 30m</div>
<div style="position:absolute;left:2104px;top:853px;width:787px;height:5px;background:#3a4049;border-radius:3px;"></div>
<div style="position:absolute;left:2104px;top:853px;width:353.363px;height:5px;background:#1fbf87;border-radius:3px;"></div>
<div style="position:absolute;left:2814.9px;top:855.17px;font:400 12.5px/25.0px 'Liberation Sans', sans-serif;color:#8a8a8a;white-space:pre;letter-spacing:-0.329px;">45% complete</div>
<div style="position:absolute;left:2036.4px;top:1145.24px;font:700 19.5px/39.0px 'Liberation Sans', sans-serif;color:#ffffff;white-space:pre;letter-spacing:-0.188px;">Master Payments in React Native</div>
<div style="position:absolute;left:2036.4px;top:1177.53px;font:400 15.5px/31.0px 'Liberation Sans', sans-serif;color:#9a9a9a;white-space:pre;letter-spacing:0.110px;">by Zuzanna Furtak</div>
<div style="position:absolute;left:2036.4px;top:1210.83px;font:400 15.5px/31.0px 'Liberation Sans', sans-serif;color:#e0e0e0;white-space:pre;letter-spacing:0.191px;">Learn about app purchases, subscriptions, and payment gateways.</div>
<div style="position:absolute;left:2036.4px;top:1251.50px;font:400 15px/30px 'Liberation Sans', sans-serif;color:#9a9a9a;white-space:pre;letter-spacing:-0.907px;">6h 15m</div>
<div style="position:absolute;left:2101.3px;top:1255.7px;width:789.6999999999998px;height:5px;background:#3a4049;border-radius:3px;"></div>
<div style="position:absolute;left:2101.3px;top:1255.7px;width:157.15029999999996px;height:5px;background:#1fbf87;border-radius:3px;"></div>
<div style="position:absolute;left:2814.9px;top:1257.87px;font:400 12.5px/25.0px 'Liberation Sans', sans-serif;color:#8a8a8a;white-space:pre;letter-spacing:-0.329px;">20% complete</div>
<div style="position:absolute;left:2036.4px;top:1548.94px;font:700 19.5px/39.0px 'Liberation Sans', sans-serif;color:#ffffff;white-space:pre;letter-spacing:-0.178px;">Performance Optimization in React Native</div>
<div style="position:absolute;left:2036.4px;top:1581.23px;font:400 15.5px/31.0px 'Liberation Sans', sans-serif;color:#9a9a9a;white-space:pre;letter-spacing:0.102px;">by Michał Mąka</div>
<div style="position:absolute;left:2428.5px;top:587px;width:70px;height:70px;background:rgba(255,255,255,0.25);border-radius:35px;"></div>
<svg style="position:absolute;left:2453px;top:610px;" width="22" height="24" viewBox="0 0 22 24"><path d="M2 1 L21 12 L2 23 Z" fill="#ffffff"/></svg>
<div style="position:absolute;left:2428.5px;top:990px;width:70px;height:70px;background:rgba(255,255,255,0.25);border-radius:35px;"></div>
<svg style="position:absolute;left:2453px;top:1013px;" width="22" height="24" viewBox="0 0 22 24"><path d="M2 1 L21 12 L2 23 Z" fill="#ffffff"/></svg>
<div style="position:absolute;left:2428.5px;top:1393px;width:70px;height:70px;background:rgba(255,255,255,0.25);border-radius:35px;"></div>
<svg style="position:absolute;left:2453px;top:1416px;" width="22" height="24" viewBox="0 0 22 24"><path d="M2 1 L21 12 L2 23 Z" fill="#ffffff"/></svg>
<div style="position:absolute;left:2306px;top:1593px;width:315px;height:6.5px;background:#4f4f4f;border-radius:4px;"></div>
<svg style="position:absolute;left:1936px;top:1720px;" width="32" height="30" viewBox="0 0 32 30"><g fill="none" stroke="#9a9a9a" stroke-width="2" stroke-dasharray="0"><path d="M14 23 H2 V2 H28 V13"/><path d="M17 15 L28 21 L23 22.5 L20 28 Z" stroke-linejoin="round"/></g></svg>
<div style="position:absolute;left:2020.5px;top:1704px;width:591.5px;height:59.5px;background:#ffffff;border-radius:30px;"></div>
<svg style="position:absolute;left:2041px;top:1721px;" width="32" height="26" viewBox="0 0 32 26"><g fill="none" stroke="#616161" stroke-width="2.2" stroke-linejoin="round"><path d="M2 24 V2 H11 L14 5 H25 V10"/><path d="M2 24 L7 10 H30 L25 24 Z"/></g></svg>
<div style="position:absolute;left:2082.7px;top:1708.99px;font:400 26px/52px 'Liberation Sans', sans-serif;color:#616161;white-space:pre;-webkit-text-stroke:0.3px #616161;letter-spacing:0.874px;">expo-video-landscape</div>
<svg style="position:absolute;left:2384px;top:1725px;" width="14" height="20" viewBox="0 0 14 20"><path d="M2 1.5 L11.5 10 L2 18.5" fill="none" stroke="#616161" stroke-width="2"/></svg>
<svg style="position:absolute;left:2433px;top:1719px;" width="21" height="30" viewBox="0 0 21 30"><g fill="none" stroke="#616161" stroke-width="2.2"><rect x="1.5" y="1.5" width="17" height="27" rx="2"/></g><path d="M8 23 H12" stroke="#616161" stroke-width="2"/></svg>
<div style="position:absolute;left:2468.7px;top:1708.99px;font:400 26px/52px 'Liberation Sans', sans-serif;color:#616161;white-space:pre;-webkit-text-stroke:0.3px #616161;letter-spacing:-0.227px;">iPad (A16)</div>
<svg style="position:absolute;left:2960px;top:1718px;" width="32" height="32" viewBox="0 0 32 32"><g fill="none" stroke="#3c3c3c" stroke-width="2"><rect x="2" y="2.5" width="27" height="10.5" rx="5.2"/></g><circle cx="7" cy="7.7" r="3.5" fill="#3c3c3c"/><rect x="2" y="16" width="28" height="12" rx="6" fill="#3c3c3c"/><circle cx="24" cy="22" r="4" fill="#f3f3f3"/></svg>
<svg style="position:absolute;left:24px;top:1790px;" width="20" height="24" viewBox="0 0 20 24"><path d="M2 21 L9 14 L3 8 M18 2 L11 9 L17 15" fill="none" stroke="#fff" stroke-width="2"/></svg>
<svg style="position:absolute;left:85px;top:1788px;" width="24" height="28" viewBox="0 0 24 28"><g fill="none" stroke="#fff" stroke-width="2.2"><circle cx="5" cy="4.5" r="3.3"/><circle cx="5" cy="23" r="3.3"/><circle cx="18" cy="11" r="3.3"/><path d="M5 8 V19.5 M18 14.5 Q18 19 5 19.5"/></g></svg>
<div style="position:absolute;left:119px;top:1779.08px;font:400 24px/48px 'Liberation Sans', sans-serif;color:#ffffff;white-space:pre;-webkit-text-stroke:0.35px #ffffff;letter-spacing:0.885px;">master*</div>
<svg style="position:absolute;left:220px;top:1792px;" width="28" height="22" viewBox="0 0 28 22"><g fill="none" stroke="#fff" stroke-width="2"><path d="M8 17 H6 Q1 17 1 12 Q1 7.5 6 7.5 Q8 1.5 14 1.5 Q21 1.5 22 8 Q27 8.5 27 12.5 Q27 17 22 17 H20"/><path d="M14 21 V9 M9.5 13 L14 8.5 L18.5 13"/></g></svg>
<svg style="position:absolute;left:280px;top:1789px;" width="28" height="26" viewBox="0 0 28 26"><g fill="none" stroke="#fff" stroke-width="2"><circle cx="13" cy="13" r="11.5"/><path d="M8.5 8.5 L17.5 17.5 M17.5 8.5 L8.5 17.5"/></g></svg>
<div style="position:absolute;left:315px;top:1779.08px;font:400 24px/48px 'Liberation Sans', sans-serif;color:#ffffff;white-space:pre;-webkit-text-stroke:0.35px #ffffff;">0</div>
<svg style="position:absolute;left:337px;top:1789px;" width="28" height="25" viewBox="0 0 28 25"><g fill="none" stroke="#fff" stroke-width="2" stroke-linejoin="round"><path d="M13 2 L25 23 H1 Z"/><path d="M13 9 V16"/></g><circle cx="13" cy="19.5" r="1.3" fill="#fff"/></svg>
<div style="position:absolute;left:372px;top:1779.08px;font:400 24px/48px 'Liberation Sans', sans-serif;color:#ffffff;white-space:pre;-webkit-text-stroke:0.35px #ffffff;">0</div>
<svg style="position:absolute;left:416px;top:1791px;" width="30" height="26" viewBox="0 0 30 26"><g fill="none" stroke="#fff" stroke-width="2" stroke-linejoin="round"><path d="M9 8 V2 L27 12 L17 18"/><ellipse cx="9" cy="18" rx="4.5" ry="5.5"/><path d="M4.5 18 H1 M13.5 18 H16 M5 14 L2 11.5 M5 22 L2 25 M13 22 L16 25"/></g></svg>
<div style="position:absolute;left:479.5px;top:1779.08px;font:400 24px/48px 'Liberation Sans', sans-serif;color:#ffffff;white-space:pre;-webkit-text-stroke:0.35px #ffffff;letter-spacing:-0.300px;">Radon IDE</div>
<svg style="position:absolute;left:604px;top:1789px;" width="28" height="28" viewBox="0 0 28 28"><g fill="none" stroke="#fff" stroke-width="2"><rect x="1.5" y="0.8" width="11.2" height="22.2" rx="2"/><path d="M12.7 0.8 H21.8 Q23.8 0.8 23.8 2.8 V11"/><circle cx="21" cy="17.3" r="4"/><path d="M18.2 20.1 L14.3 24.2"/></g></svg>
<div style="position:absolute;left:2001px;top:1779.08px;font:400 24px/48px 'Liberation Sans', sans-serif;color:#ffffff;white-space:pre;-webkit-text-stroke:0.35px #ffffff;letter-spacing:0.883px;">Ln 148, Col 24</div>
<div style="position:absolute;left:2201.6px;top:1779.08px;font:400 24px/48px 'Liberation Sans', sans-serif;color:#ffffff;white-space:pre;-webkit-text-stroke:0.35px #ffffff;letter-spacing:0.433px;">Spaces: 2</div>
<div style="position:absolute;left:2345px;top:1779.08px;font:400 24px/48px 'Liberation Sans', sans-serif;color:#ffffff;white-space:pre;-webkit-text-stroke:0.35px #ffffff;letter-spacing:1.001px;">UTF-8</div>
<div style="position:absolute;left:2451px;top:1779.08px;font:400 24px/48px 'Liberation Sans', sans-serif;color:#ffffff;white-space:pre;-webkit-text-stroke:0.35px #ffffff;letter-spacing:-2.409px;">LF</div>
<div style="position:absolute;left:2511px;top:1779.08px;font:400 24px/48px 'Liberation Sans', sans-serif;color:#ffffff;white-space:pre;-webkit-text-stroke:0.35px #ffffff;letter-spacing:0.650px;">{ }</div>
<div style="position:absolute;left:2551px;top:1779.08px;font:400 24px/48px 'Liberation Sans', sans-serif;color:#ffffff;white-space:pre;-webkit-text-stroke:0.35px #ffffff;letter-spacing:0.533px;">TypeScript JSX</div>
<svg style="position:absolute;left:2753px;top:1789px;" width="32" height="28" viewBox="0 0 32 28"><path d="M1.5 16 Q1.5 12 5 11 H26 Q29.5 12 29.5 16 V20 Q24 25.5 15.5 25.5 Q7 25.5 1.5 20 Z" fill="#fff"/><g fill="none" stroke="#fff" stroke-width="2.6"><rect x="4.6" y="2.6" width="9" height="8.6" rx="4"/><rect x="15.6" y="2.6" width="9" height="8.6" rx="4"/></g><rect x="9.6" y="15" width="2.3" height="5" rx="1" fill="#007acc"/><rect x="15.8" y="15" width="2.3" height="5" rx="1" fill="#007acc"/></svg>
<svg style="position:absolute;left:2813px;top:1792px;" width="30" height="20" viewBox="0 0 30 20"><g fill="none" stroke="#fff" stroke-width="2"><path d="M1 11 L6 16 L17 3 M11 16 L25 2"/></g></svg>
<div style="position:absolute;left:2850.7px;top:1779.08px;font:400 24px/48px 'Liberation Sans', sans-serif;color:#ffffff;white-space:pre;-webkit-text-stroke:0.35px #ffffff;letter-spacing:0.763px;">Prettier</div>
<svg style="position:absolute;left:2966px;top:1787px;" width="30" height="30" viewBox="0 0 30 30"><g fill="none" stroke="#fff" stroke-width="2" stroke-linejoin="round"><path d="M13 4 Q5 4 5 13 V19 L2 23 H24 L21 19 V15"/><path d="M10 25 Q13 29 16 25"/></g><circle cx="22" cy="7" r="5.5" fill="#fff"/></svg>
</body></html>
